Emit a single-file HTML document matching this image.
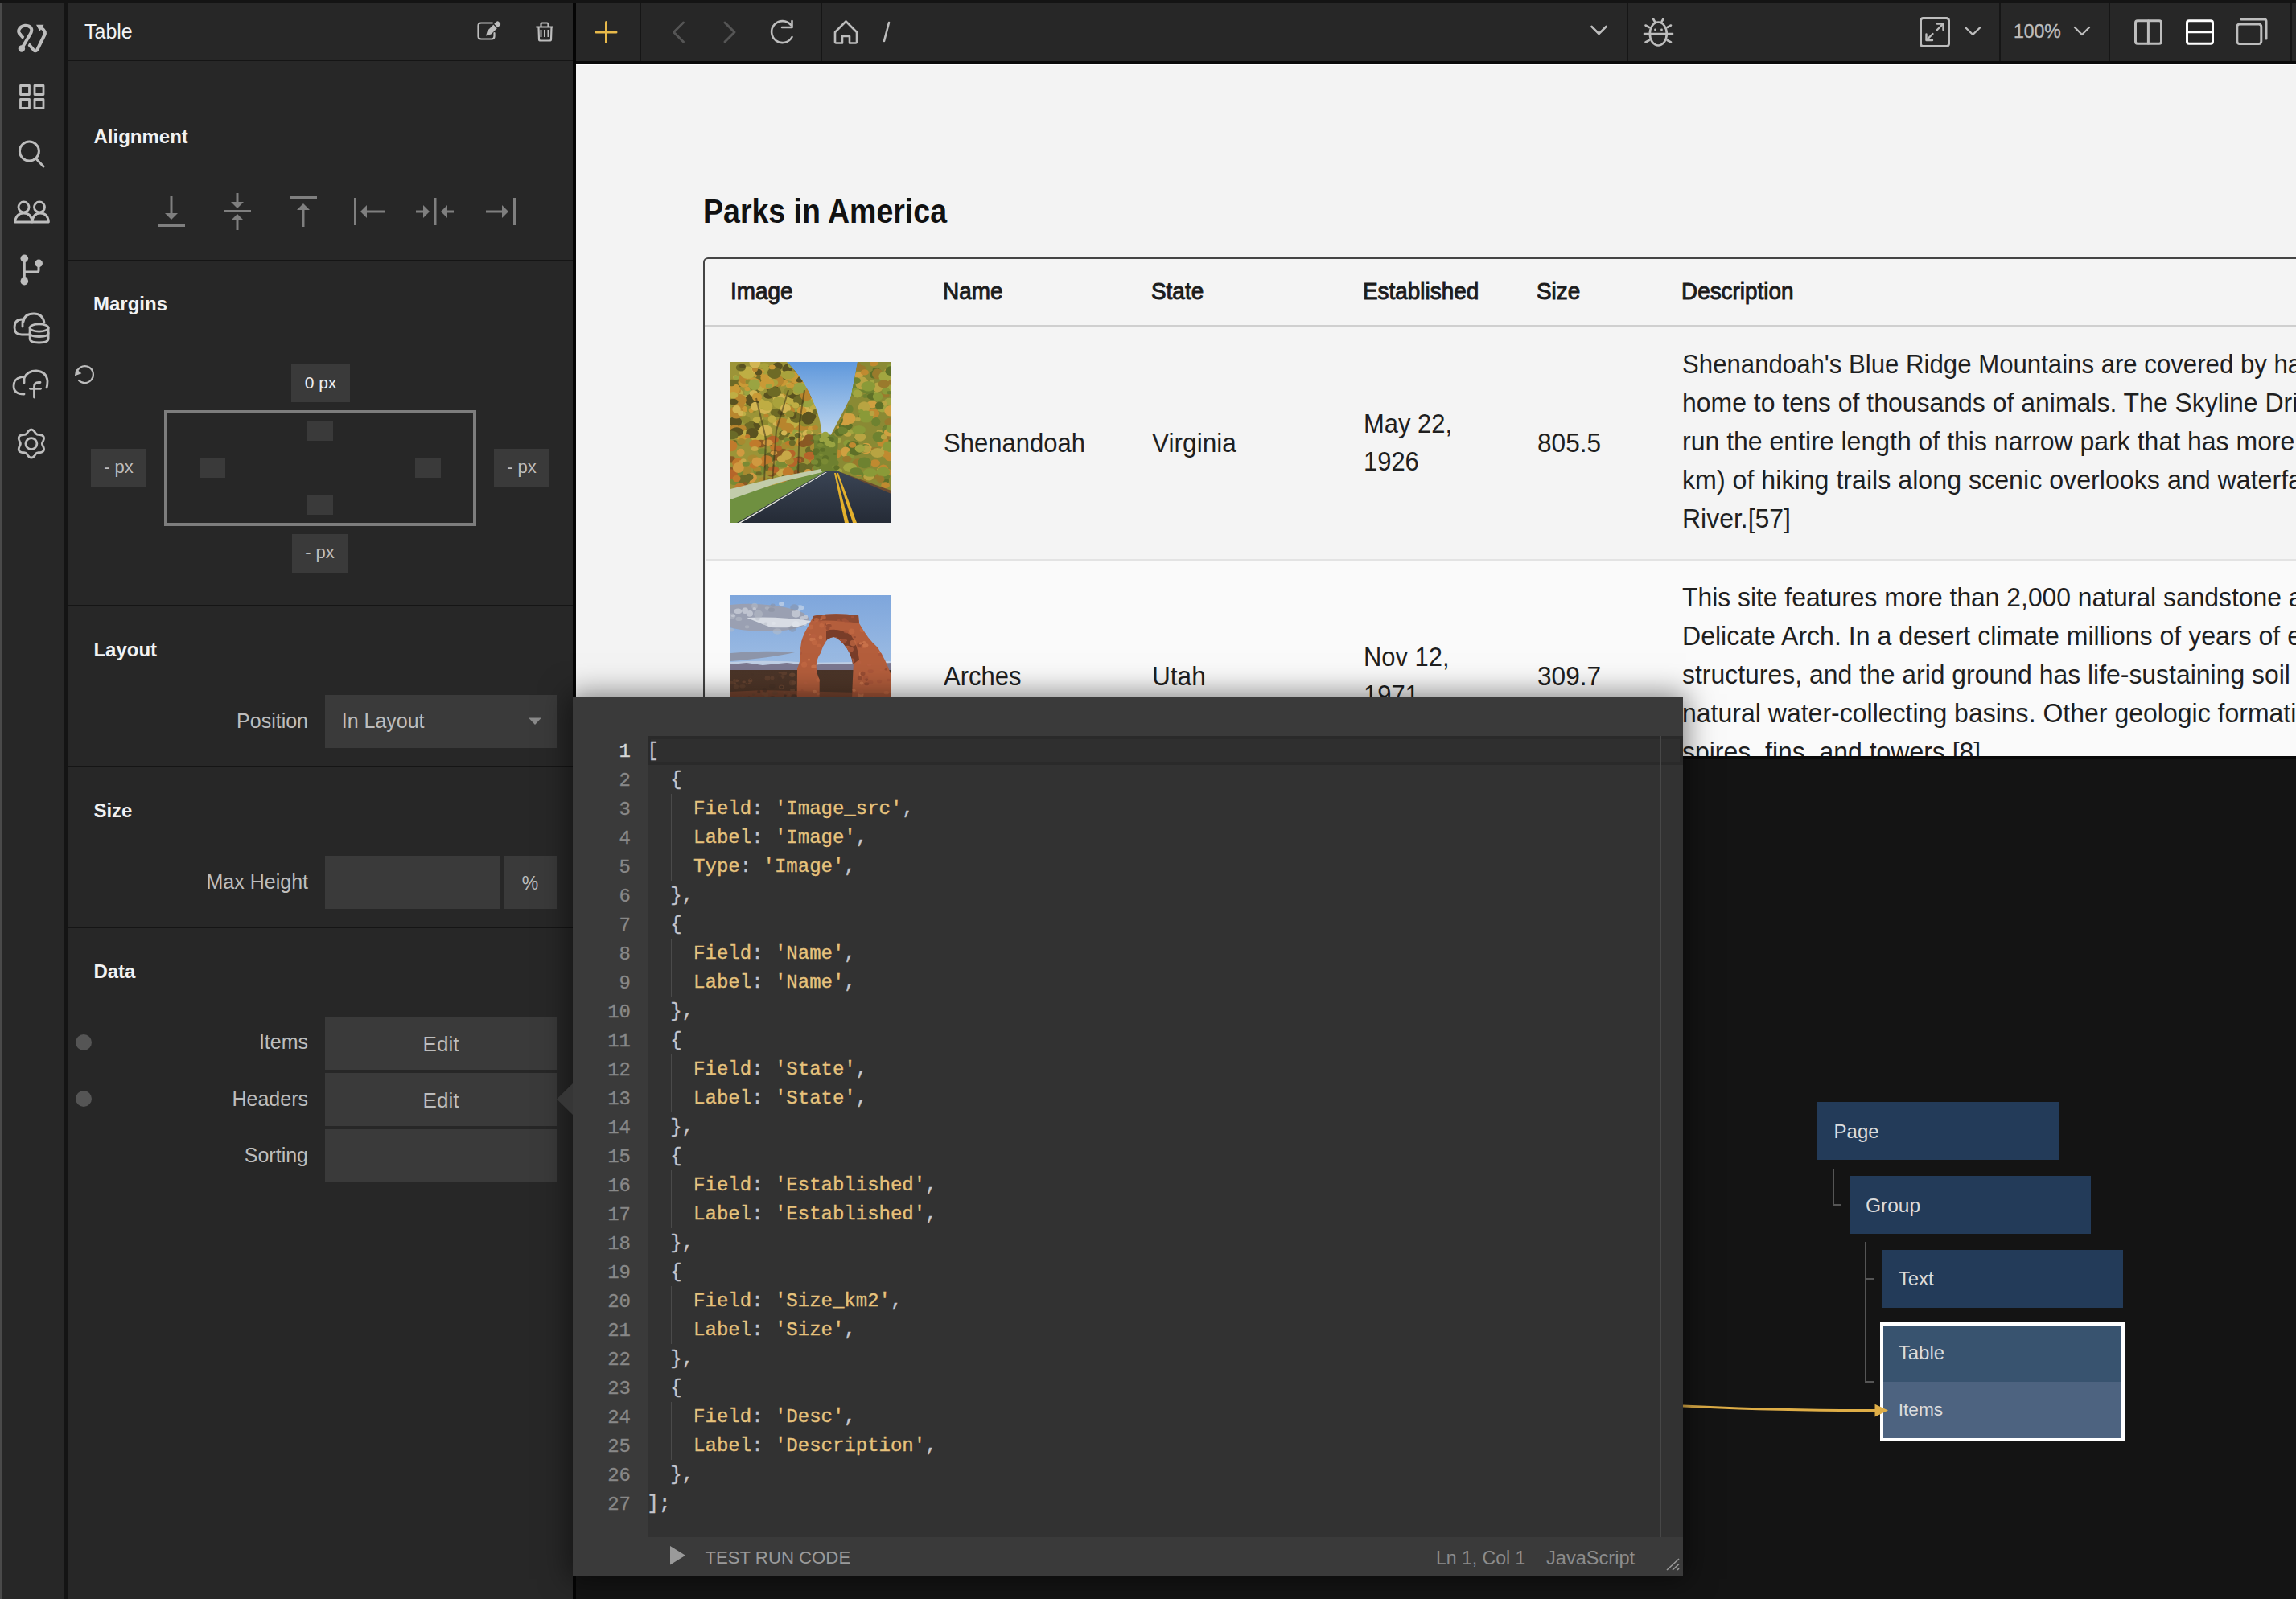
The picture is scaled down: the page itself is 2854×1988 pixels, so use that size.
<!DOCTYPE html>
<html><head><meta charset="utf-8"><style>
html,body{margin:0;padding:0;width:2854px;height:1988px;overflow:hidden;background:#141414;}
body{position:relative;}
</style></head><body>
<div style="position:absolute;left:0px;top:0px;width:2854px;height:1988px;background:#141414;"></div>
<div style="position:absolute;left:0px;top:4px;width:80px;height:1984px;background:#272727;"></div>
<div style="position:absolute;left:0px;top:4px;width:2px;height:1984px;background:#4a4a4a;"></div>
<div style="position:absolute;left:84px;top:4px;width:628px;height:1984px;background:#272727;"></div>
<div style="position:absolute;left:712px;top:4px;width:4px;height:1984px;background:#050505;"></div>
<div style="position:absolute;left:716px;top:4px;width:2138px;height:72px;background:#272727;"></div>
<div style="position:absolute;left:716px;top:76px;width:2138px;height:4px;background:#0a0a0a;"></div>
<div style="position:absolute;left:716px;top:80px;width:2138px;height:860px;background:#f3f3f3;"></div>
<div style="position:absolute;left:716px;top:80px;width:2138px;height:1px;background:#ffffff;"></div>
<div style="position:absolute;left:795px;top:4px;width:2px;height:72px;background:#161616;"></div>
<div style="position:absolute;left:1020px;top:4px;width:2px;height:72px;background:#161616;"></div>
<div style="position:absolute;left:2022px;top:4px;width:2px;height:72px;background:#161616;"></div>
<div style="position:absolute;left:2485px;top:4px;width:2px;height:72px;background:#161616;"></div>
<div style="position:absolute;left:2621px;top:4px;width:2px;height:72px;background:#161616;"></div>
<div style="position:absolute;left:2847px;top:4px;width:2px;height:72px;background:#161616;"></div>
<div style="position:absolute;left:105px;top:23.83px;font:400 25px/31px 'Liberation Sans', sans-serif;color:#f4f4f4;white-space:nowrap;">Table</div>
<div style="position:absolute;left:84px;top:74px;width:628px;height:2px;background:#151515;"></div>
<div style="position:absolute;left:116.5px;top:155.48px;font:700 24px/30px 'Liberation Sans', sans-serif;color:#f2f2f2;white-space:nowrap;">Alignment</div>
<div style="position:absolute;left:84px;top:323px;width:628px;height:2px;background:#151515;"></div>
<div style="position:absolute;left:116px;top:363.18px;font:700 24px/30px 'Liberation Sans', sans-serif;color:#f2f2f2;white-space:nowrap;">Margins</div>
<div style="position:absolute;left:362px;top:452px;width:73px;height:48px;background:#3a3a3a;"></div>
<div style="position:absolute;left:398.5px;top:462.92px;font:400 21px/26px 'Liberation Sans', sans-serif;color:#ededed;white-space:nowrap;transform:translateX(-50%);">0 px</div>
<div style="position:absolute;left:204px;top:510px;width:380px;height:136px;background:transparent;border:4px solid #7d7d7d;"></div>
<div style="position:absolute;left:382px;top:524px;width:32px;height:24px;background:#3a3a3a;"></div>
<div style="position:absolute;left:248px;top:570px;width:32px;height:24px;background:#3a3a3a;"></div>
<div style="position:absolute;left:516px;top:570px;width:32px;height:24px;background:#3a3a3a;"></div>
<div style="position:absolute;left:382px;top:616px;width:32px;height:24px;background:#3a3a3a;"></div>
<div style="position:absolute;left:113px;top:558px;width:69px;height:48px;background:#3a3a3a;"></div>
<div style="position:absolute;left:147.5px;top:566.87px;font:400 22px/28px 'Liberation Sans', sans-serif;color:#bdbdbd;white-space:nowrap;transform:translateX(-50%);">- px</div>
<div style="position:absolute;left:614px;top:558px;width:69px;height:48px;background:#3a3a3a;"></div>
<div style="position:absolute;left:648.5px;top:566.87px;font:400 22px/28px 'Liberation Sans', sans-serif;color:#bdbdbd;white-space:nowrap;transform:translateX(-50%);">- px</div>
<div style="position:absolute;left:363px;top:664px;width:69px;height:48px;background:#3a3a3a;"></div>
<div style="position:absolute;left:397.5px;top:672.97px;font:400 22px/28px 'Liberation Sans', sans-serif;color:#bdbdbd;white-space:nowrap;transform:translateX(-50%);">- px</div>
<div style="position:absolute;left:84px;top:752px;width:628px;height:2px;background:#151515;"></div>
<div style="position:absolute;left:116.4px;top:793.48px;font:700 24px/30px 'Liberation Sans', sans-serif;color:#f2f2f2;white-space:nowrap;">Layout</div>
<div style="position:absolute;right:2471px;top:881.23px;font:400 25px/31px 'Liberation Sans', sans-serif;color:#bdbdbd;white-space:nowrap;">Position</div>
<div style="position:absolute;left:404px;top:864px;width:288px;height:66px;background:#3a3a3a;"></div>
<div style="position:absolute;left:424.7px;top:881.23px;font:400 25px/31px 'Liberation Sans', sans-serif;color:#bdbdbd;white-space:nowrap;">In Layout</div>
<div style="position:absolute;left:84px;top:952px;width:628px;height:2px;background:#151515;"></div>
<div style="position:absolute;left:116.4px;top:992.68px;font:700 24px/30px 'Liberation Sans', sans-serif;color:#f2f2f2;white-space:nowrap;">Size</div>
<div style="position:absolute;right:2471px;top:1080.83px;font:400 25px/31px 'Liberation Sans', sans-serif;color:#bdbdbd;white-space:nowrap;">Max Height</div>
<div style="position:absolute;left:404px;top:1064px;width:218px;height:66px;background:#3a3a3a;"></div>
<div style="position:absolute;left:626px;top:1064px;width:66px;height:66px;background:#3a3a3a;"></div>
<div style="position:absolute;left:659px;top:1083.53px;font:400 23px/29px 'Liberation Sans', sans-serif;color:#bdbdbd;white-space:nowrap;transform:translateX(-50%);">%</div>
<div style="position:absolute;left:84px;top:1152px;width:628px;height:2px;background:#151515;"></div>
<div style="position:absolute;left:116.4px;top:1192.68px;font:700 24px/30px 'Liberation Sans', sans-serif;color:#f2f2f2;white-space:nowrap;">Data</div>
<div style="position:absolute;left:404px;top:1264px;width:288px;height:66px;background:#3a3a3a;"></div>
<div style="position:absolute;left:548px;top:1281.79px;font:400 26px/32px 'Liberation Sans', sans-serif;color:#bdbdbd;white-space:nowrap;transform:translateX(-50%);">Edit</div>
<div style="position:absolute;right:2471px;top:1280.43px;font:400 25px/31px 'Liberation Sans', sans-serif;color:#bdbdbd;white-space:nowrap;">Items</div>
<div style="position:absolute;left:404px;top:1334px;width:288px;height:66px;background:#3a3a3a;"></div>
<div style="position:absolute;left:548px;top:1351.89px;font:400 26px/32px 'Liberation Sans', sans-serif;color:#bdbdbd;white-space:nowrap;transform:translateX(-50%);">Edit</div>
<div style="position:absolute;right:2471px;top:1350.53px;font:400 25px/31px 'Liberation Sans', sans-serif;color:#bdbdbd;white-space:nowrap;">Headers</div>
<div style="position:absolute;left:404px;top:1404px;width:288px;height:66px;background:#3a3a3a;"></div>
<div style="position:absolute;right:2471px;top:1420.63px;font:400 25px/31px 'Liberation Sans', sans-serif;color:#bdbdbd;white-space:nowrap;">Sorting</div>
<div style="position:absolute;left:94px;top:1286px;width:20px;height:20px;background:#555555;border-radius:50%;"></div>
<div style="position:absolute;left:94px;top:1356px;width:20px;height:20px;background:#555555;border-radius:50%;"></div>
<div style="position:absolute;left:2503px;top:24.53px;font:400 23px/29px 'Liberation Sans', sans-serif;color:#bdbdbd;white-space:nowrap;-webkit-text-stroke:0.4px #bdbdbd;">100%</div>
<div style="position:absolute;left:716px;top:81px;width:2138px;height:859px;overflow:hidden;"><div style="position:absolute;left:-716px;top:-81px;width:2854px;height:1988px;"><div style="position:absolute;left:874px;top:236.94px;font:700 42px/52px 'Liberation Sans', sans-serif;color:#111111;white-space:nowrap;transform:scaleX(0.893);transform-origin:0 0;">Parks in America</div><div style="position:absolute;left:874px;top:320px;width:2200px;height:1200px;background:#f4f4f4;border:2px solid #444;border-radius:6px;box-sizing:border-box;"></div><div style="position:absolute;left:876px;top:404px;width:2200px;height:2px;background:#cfcfcf;"></div><div style="position:absolute;left:877px;top:695px;width:2200px;height:2px;background:#e3e3e3;"></div><div style="position:absolute;left:877px;top:697px;width:2200px;height:600px;background:#fafafa;"></div><div style="position:absolute;left:907.8px;top:343.30px;font:400 30px/38px 'Liberation Sans', sans-serif;color:#1c1c1c;white-space:nowrap;transform:scaleX(0.93);transform-origin:0 0;-webkit-text-stroke:1px #1c1c1c;">Image</div><div style="position:absolute;left:1171.8px;top:343.30px;font:400 30px/38px 'Liberation Sans', sans-serif;color:#1c1c1c;white-space:nowrap;transform:scaleX(0.93);transform-origin:0 0;-webkit-text-stroke:1px #1c1c1c;">Name</div><div style="position:absolute;left:1431.2px;top:343.30px;font:400 30px/38px 'Liberation Sans', sans-serif;color:#1c1c1c;white-space:nowrap;transform:scaleX(0.93);transform-origin:0 0;-webkit-text-stroke:1px #1c1c1c;">State</div><div style="position:absolute;left:1693.8px;top:343.30px;font:400 30px/38px 'Liberation Sans', sans-serif;color:#1c1c1c;white-space:nowrap;transform:scaleX(0.93);transform-origin:0 0;-webkit-text-stroke:1px #1c1c1c;">Established</div><div style="position:absolute;left:1909.8px;top:343.30px;font:400 30px/38px 'Liberation Sans', sans-serif;color:#1c1c1c;white-space:nowrap;transform:scaleX(0.93);transform-origin:0 0;-webkit-text-stroke:1px #1c1c1c;">Size</div><div style="position:absolute;left:2089.7px;top:343.30px;font:400 30px/38px 'Liberation Sans', sans-serif;color:#1c1c1c;white-space:nowrap;transform:scaleX(0.93);transform-origin:0 0;-webkit-text-stroke:1px #1c1c1c;">Description</div><div style="position:absolute;left:1173px;top:529.21px;font:400 34px/42px 'Liberation Sans', sans-serif;color:#1f1f1f;white-space:nowrap;transform:scaleX(0.912);transform-origin:0 0;">Shenandoah</div><div style="position:absolute;left:1432px;top:529.21px;font:400 34px/42px 'Liberation Sans', sans-serif;color:#1f1f1f;white-space:nowrap;transform:scaleX(0.93);transform-origin:0 0;">Virginia</div><div style="position:absolute;left:1694.6px;top:504.71px;font:400 34px/42px 'Liberation Sans', sans-serif;color:#1f1f1f;white-space:nowrap;transform:scaleX(0.91);transform-origin:0 0;">May 22,</div><div style="position:absolute;left:1694.6px;top:552.21px;font:400 34px/42px 'Liberation Sans', sans-serif;color:#1f1f1f;white-space:nowrap;transform:scaleX(0.91);transform-origin:0 0;">1926</div><div style="position:absolute;left:1910.6px;top:529.21px;font:400 34px/42px 'Liberation Sans', sans-serif;color:#1f1f1f;white-space:nowrap;transform:scaleX(0.93);transform-origin:0 0;">805.5</div><div style="position:absolute;left:2090.5px;top:431.21px;font:400 34px/42px 'Liberation Sans', sans-serif;color:#1f1f1f;white-space:nowrap;transform:scaleX(0.9168);transform-origin:0 0;">Shenandoah's Blue Ridge Mountains are covered by hardwood forests that teem with</div><div style="position:absolute;left:2090.5px;top:479.21px;font:400 34px/42px 'Liberation Sans', sans-serif;color:#1f1f1f;white-space:nowrap;transform:scaleX(0.9403);transform-origin:0 0;">home to tens of thousands of animals. The Skyline Drive and Appalachian Trail</div><div style="position:absolute;left:2090.5px;top:527.21px;font:400 34px/42px 'Liberation Sans', sans-serif;color:#1f1f1f;white-space:nowrap;transform:scaleX(0.9413);transform-origin:0 0;">run the entire length of this narrow park that has more than 500 miles (800</div><div style="position:absolute;left:2090.5px;top:575.21px;font:400 34px/42px 'Liberation Sans', sans-serif;color:#1f1f1f;white-space:nowrap;transform:scaleX(0.9467);transform-origin:0 0;">km) of hiking trails along scenic overlooks and waterfalls of the Shenandoah</div><div style="position:absolute;left:2090.5px;top:623.21px;font:400 34px/42px 'Liberation Sans', sans-serif;color:#1f1f1f;white-space:nowrap;transform:scaleX(0.94);transform-origin:0 0;">River.[57]</div><div style="position:absolute;left:1173px;top:819.21px;font:400 34px/42px 'Liberation Sans', sans-serif;color:#1f1f1f;white-space:nowrap;transform:scaleX(0.912);transform-origin:0 0;">Arches</div><div style="position:absolute;left:1432px;top:819.21px;font:400 34px/42px 'Liberation Sans', sans-serif;color:#1f1f1f;white-space:nowrap;transform:scaleX(0.93);transform-origin:0 0;">Utah</div><div style="position:absolute;left:1694.6px;top:794.71px;font:400 34px/42px 'Liberation Sans', sans-serif;color:#1f1f1f;white-space:nowrap;transform:scaleX(0.91);transform-origin:0 0;">Nov 12,</div><div style="position:absolute;left:1694.6px;top:842.21px;font:400 34px/42px 'Liberation Sans', sans-serif;color:#1f1f1f;white-space:nowrap;transform:scaleX(0.91);transform-origin:0 0;">1971</div><div style="position:absolute;left:1910.6px;top:819.21px;font:400 34px/42px 'Liberation Sans', sans-serif;color:#1f1f1f;white-space:nowrap;transform:scaleX(0.93);transform-origin:0 0;">309.7</div><div style="position:absolute;left:2090.5px;top:721.21px;font:400 34px/42px 'Liberation Sans', sans-serif;color:#1f1f1f;white-space:nowrap;transform:scaleX(0.9362);transform-origin:0 0;">This site features more than 2,000 natural sandstone arches, including the famous</div><div style="position:absolute;left:2090.5px;top:769.21px;font:400 34px/42px 'Liberation Sans', sans-serif;color:#1f1f1f;white-space:nowrap;transform:scaleX(0.9432);transform-origin:0 0;">Delicate Arch. In a desert climate millions of years of erosion have led to these</div><div style="position:absolute;left:2090.5px;top:817.21px;font:400 34px/42px 'Liberation Sans', sans-serif;color:#1f1f1f;white-space:nowrap;transform:scaleX(0.9389);transform-origin:0 0;">structures, and the arid ground has life-sustaining soil crust and potholes,</div><div style="position:absolute;left:2090.5px;top:865.21px;font:400 34px/42px 'Liberation Sans', sans-serif;color:#1f1f1f;white-space:nowrap;transform:scaleX(0.9416);transform-origin:0 0;">natural water-collecting basins. Other geologic formations are stone columns,</div><div style="position:absolute;left:2090.5px;top:913.21px;font:400 34px/42px 'Liberation Sans', sans-serif;color:#1f1f1f;white-space:nowrap;transform:scaleX(0.94);transform-origin:0 0;">spires, fins, and towers.[8]</div><svg style="position:absolute;left:908px;top:450px" width="200" height="200" viewBox="0 0 200 200">
<defs>
<linearGradient id="sky1" x1="0" y1="0" x2="0" y2="1"><stop offset="0" stop-color="#5f98dc"/><stop offset="1" stop-color="#c3d9ef"/></linearGradient>
<linearGradient id="road1" x1="0" y1="0" x2="0" y2="1"><stop offset="0" stop-color="#3a4454"/><stop offset="1" stop-color="#252b36"/></linearGradient>
<clipPath id="ltree"><path d="M0,0 L70,0 Q92,22 102,48 Q114,72 114,100 L114,140 L0,165 Z"/></clipPath>
<clipPath id="rtree"><path d="M158,0 L200,0 L200,168 L126,138 Q116,112 124,94 Q142,70 150,42 Z"/></clipPath>
</defs>
<rect width="200" height="200" fill="#8c8430"/>
<polygon points="66,0 162,0 156,30 140,62 124,92 108,98 103,70 92,40 78,15" fill="url(#sky1)"/>
<g clip-path="url(#ltree)"><rect width="200" height="200" fill="#9c9438"/><ellipse cx="37.2" cy="15.1" rx="6.9" ry="6.4" fill="#bfae44"/><ellipse cx="10.8" cy="58.3" rx="8.5" ry="5.2" fill="#6e6a26"/><ellipse cx="49.9" cy="7.0" rx="3.5" ry="2.2" fill="#5a5220"/><ellipse cx="65.0" cy="94.7" rx="6.8" ry="5.6" fill="#a9a23c"/><ellipse cx="45.6" cy="97.6" rx="3.3" ry="2.3" fill="#8e8a30"/><ellipse cx="16.6" cy="11.8" rx="4.9" ry="3.1" fill="#8e8a30"/><ellipse cx="65.7" cy="18.8" rx="3.6" ry="3.0" fill="#bfae44"/><ellipse cx="71.2" cy="49.6" rx="6.2" ry="4.9" fill="#9aa442"/><ellipse cx="106.2" cy="36.2" rx="4.5" ry="3.9" fill="#8e8a30"/><ellipse cx="28.1" cy="57.4" rx="6.2" ry="5.5" fill="#9aa442"/><ellipse cx="33.1" cy="98.0" rx="3.7" ry="2.5" fill="#5a5220"/><ellipse cx="39.3" cy="93.3" rx="5.5" ry="5.0" fill="#bfae44"/><ellipse cx="65.9" cy="87.5" rx="4.9" ry="4.1" fill="#9aa442"/><ellipse cx="66.7" cy="45.6" rx="8.0" ry="6.3" fill="#c99a36"/><ellipse cx="76.4" cy="6.1" rx="7.2" ry="5.1" fill="#b8862e"/><ellipse cx="44.4" cy="66.9" rx="3.1" ry="2.3" fill="#b8862e"/><ellipse cx="70.3" cy="49.4" rx="4.3" ry="2.8" fill="#c99a36"/><ellipse cx="28.5" cy="39.1" rx="8.2" ry="5.5" fill="#bfae44"/><ellipse cx="46.2" cy="27.8" rx="3.8" ry="3.6" fill="#5a5220"/><ellipse cx="32.0" cy="41.5" rx="5.2" ry="5.1" fill="#5a5220"/><ellipse cx="17.4" cy="17.6" rx="4.4" ry="2.7" fill="#6e6a26"/><ellipse cx="95.6" cy="18.2" rx="4.7" ry="3.6" fill="#8e8a30"/><ellipse cx="42.5" cy="56.6" rx="8.7" ry="8.5" fill="#d2b552"/><ellipse cx="75.3" cy="74.0" rx="5.7" ry="4.3" fill="#d2b552"/><ellipse cx="45.9" cy="10.4" rx="6.8" ry="4.6" fill="#a9a23c"/><ellipse cx="113.2" cy="44.1" rx="3.7" ry="2.3" fill="#a9a23c"/><ellipse cx="65.2" cy="53.7" rx="8.7" ry="5.5" fill="#a9a23c"/><ellipse cx="23.9" cy="37.6" rx="6.8" ry="5.7" fill="#9aa442"/><ellipse cx="54.5" cy="11.5" rx="5.9" ry="4.7" fill="#b8862e"/><ellipse cx="35.9" cy="14.4" rx="7.5" ry="5.9" fill="#c99a36"/><ellipse cx="79.6" cy="51.6" rx="4.2" ry="3.2" fill="#d2b552"/><ellipse cx="79.4" cy="91.4" rx="7.5" ry="7.5" fill="#c99a36"/><ellipse cx="99.3" cy="69.6" rx="4.6" ry="4.4" fill="#9aa442"/><ellipse cx="40.9" cy="22.3" rx="6.2" ry="4.6" fill="#d2b552"/><ellipse cx="25.6" cy="81.2" rx="8.9" ry="8.2" fill="#6e6a26"/><ellipse cx="94.1" cy="74.0" rx="4.4" ry="3.5" fill="#d2b552"/><ellipse cx="84.1" cy="99.0" rx="7.7" ry="5.4" fill="#b8862e"/><ellipse cx="79.6" cy="95.7" rx="5.7" ry="5.6" fill="#9aa442"/><ellipse cx="41.9" cy="22.0" rx="4.4" ry="3.2" fill="#6e6a26"/><ellipse cx="55.5" cy="98.5" rx="6.7" ry="5.3" fill="#a9a23c"/><ellipse cx="75.1" cy="80.0" rx="3.5" ry="3.4" fill="#bfae44"/><ellipse cx="90.0" cy="75.0" rx="5.9" ry="4.5" fill="#8e8a30"/><ellipse cx="73.1" cy="8.7" rx="8.7" ry="6.8" fill="#5a5220"/><ellipse cx="85.5" cy="8.5" rx="4.0" ry="2.4" fill="#8e8a30"/><ellipse cx="67.9" cy="46.5" rx="6.9" ry="6.0" fill="#b8862e"/><ellipse cx="40.3" cy="54.9" rx="3.8" ry="3.5" fill="#a9a23c"/><ellipse cx="83.5" cy="10.3" rx="7.5" ry="5.8" fill="#8e8a30"/><ellipse cx="100.3" cy="82.6" rx="4.3" ry="2.9" fill="#c99a36"/><ellipse cx="57.6" cy="76.4" rx="5.0" ry="3.8" fill="#d2b552"/><ellipse cx="15.1" cy="91.0" rx="5.1" ry="4.4" fill="#b8862e"/><ellipse cx="93.7" cy="51.7" rx="8.0" ry="5.2" fill="#d2b552"/><ellipse cx="17.5" cy="51.1" rx="8.2" ry="6.9" fill="#8e8a30"/><ellipse cx="89.2" cy="15.0" rx="3.8" ry="3.2" fill="#bfae44"/><ellipse cx="37.5" cy="51.8" rx="6.3" ry="6.0" fill="#bfae44"/><ellipse cx="6.5" cy="19.1" rx="3.3" ry="2.6" fill="#bfae44"/><ellipse cx="64.6" cy="76.0" rx="8.5" ry="6.2" fill="#b8862e"/><ellipse cx="111.9" cy="60.6" rx="4.2" ry="3.3" fill="#c99a36"/><ellipse cx="61.3" cy="47.8" rx="8.6" ry="8.2" fill="#d2b552"/><ellipse cx="108.4" cy="26.0" rx="6.4" ry="6.0" fill="#6e6a26"/><ellipse cx="15.8" cy="12.2" rx="5.7" ry="4.9" fill="#bfae44"/><ellipse cx="49.3" cy="21.3" rx="4.8" ry="4.6" fill="#bfae44"/><ellipse cx="17.8" cy="71.6" rx="7.0" ry="4.9" fill="#8e8a30"/><ellipse cx="15.8" cy="46.8" rx="7.5" ry="5.7" fill="#bfae44"/><ellipse cx="56.0" cy="99.0" rx="8.0" ry="7.1" fill="#8e8a30"/><ellipse cx="114.3" cy="40.4" rx="5.5" ry="4.0" fill="#9aa442"/><ellipse cx="83.0" cy="1.9" rx="6.3" ry="5.6" fill="#b8862e"/><ellipse cx="44.2" cy="51.7" rx="4.8" ry="3.1" fill="#bfae44"/><ellipse cx="105.6" cy="22.9" rx="8.3" ry="5.8" fill="#bfae44"/><ellipse cx="4.6" cy="77.9" rx="4.6" ry="4.3" fill="#8e8a30"/><ellipse cx="97.7" cy="67.6" rx="8.7" ry="5.7" fill="#5a5220"/><ellipse cx="105.7" cy="57.1" rx="7.2" ry="5.1" fill="#bfae44"/><ellipse cx="92.0" cy="18.3" rx="8.4" ry="8.2" fill="#c99a36"/><ellipse cx="73.0" cy="80.2" rx="3.5" ry="2.2" fill="#6e6a26"/><ellipse cx="99.2" cy="45.4" rx="5.0" ry="3.9" fill="#d2b552"/><ellipse cx="105.3" cy="62.2" rx="3.3" ry="3.2" fill="#6e6a26"/><ellipse cx="111.5" cy="26.2" rx="4.1" ry="3.5" fill="#c99a36"/><ellipse cx="61.1" cy="20.6" rx="5.7" ry="4.0" fill="#8e8a30"/><ellipse cx="92.4" cy="99.4" rx="3.2" ry="2.9" fill="#a9a23c"/><ellipse cx="63.4" cy="18.9" rx="5.8" ry="3.8" fill="#b8862e"/><ellipse cx="94.2" cy="43.2" rx="6.0" ry="5.9" fill="#5a5220"/><ellipse cx="35.4" cy="21.5" rx="4.4" ry="4.1" fill="#6e6a26"/><ellipse cx="81.3" cy="63.6" rx="5.4" ry="5.4" fill="#9aa442"/><ellipse cx="96.3" cy="1.4" rx="6.8" ry="5.2" fill="#c99a36"/><ellipse cx="6.4" cy="66.5" rx="5.3" ry="4.6" fill="#d2b552"/><ellipse cx="32.4" cy="24.2" rx="4.8" ry="3.2" fill="#b8862e"/><ellipse cx="30.9" cy="0.4" rx="5.2" ry="5.1" fill="#9aa442"/><ellipse cx="62.9" cy="24.4" rx="8.8" ry="6.0" fill="#c99a36"/><ellipse cx="21.0" cy="33.5" rx="3.5" ry="2.8" fill="#c99a36"/><ellipse cx="23.1" cy="50.5" rx="3.0" ry="2.8" fill="#c99a36"/><ellipse cx="16.5" cy="58.7" rx="5.4" ry="3.9" fill="#c99a36"/><ellipse cx="26.8" cy="58.6" rx="6.2" ry="5.3" fill="#8e8a30"/><ellipse cx="82.3" cy="87.9" rx="5.3" ry="4.7" fill="#9aa442"/><ellipse cx="56.8" cy="28.4" rx="6.7" ry="4.1" fill="#8e8a30"/><ellipse cx="96.1" cy="89.2" rx="6.8" ry="4.4" fill="#d2b552"/><ellipse cx="60.2" cy="50.4" rx="8.0" ry="7.5" fill="#a9a23c"/><ellipse cx="67.2" cy="89.3" rx="7.1" ry="4.5" fill="#6e6a26"/><ellipse cx="4.8" cy="63.7" rx="8.8" ry="8.2" fill="#5a5220"/><ellipse cx="64.2" cy="62.8" rx="6.8" ry="5.4" fill="#6e6a26"/><ellipse cx="0.4" cy="79.8" rx="7.5" ry="7.2" fill="#d2b552"/><ellipse cx="10.6" cy="52.6" rx="7.5" ry="5.2" fill="#b8862e"/><ellipse cx="8.6" cy="26.6" rx="7.4" ry="5.1" fill="#6e6a26"/><ellipse cx="74.7" cy="46.0" rx="8.1" ry="6.4" fill="#bfae44"/><ellipse cx="78.6" cy="76.7" rx="6.7" ry="4.2" fill="#6e6a26"/><ellipse cx="17.0" cy="25.4" rx="7.5" ry="6.3" fill="#c99a36"/><ellipse cx="15.3" cy="48.2" rx="5.9" ry="5.2" fill="#bfae44"/><ellipse cx="77.7" cy="29.1" rx="6.1" ry="4.8" fill="#b8862e"/><ellipse cx="88.2" cy="99.3" rx="6.3" ry="6.2" fill="#c99a36"/><ellipse cx="107.7" cy="1.8" rx="5.8" ry="5.7" fill="#d2b552"/><ellipse cx="51.7" cy="26.9" rx="4.3" ry="2.7" fill="#6e6a26"/><ellipse cx="10.4" cy="74.7" rx="4.6" ry="3.0" fill="#9aa442"/><ellipse cx="94.3" cy="50.9" rx="8.3" ry="5.8" fill="#9aa442"/><ellipse cx="103.2" cy="48.6" rx="3.1" ry="3.1" fill="#a9a23c"/><ellipse cx="78.4" cy="40.5" rx="7.4" ry="5.4" fill="#5a5220"/><ellipse cx="36.3" cy="84.0" rx="3.0" ry="2.8" fill="#9aa442"/><ellipse cx="13.8" cy="92.6" rx="7.3" ry="5.1" fill="#c99a36"/><ellipse cx="7.5" cy="39.0" rx="8.2" ry="6.1" fill="#bfae44"/><ellipse cx="49.2" cy="27.5" rx="3.3" ry="2.0" fill="#bfae44"/><ellipse cx="76.1" cy="63.5" rx="3.9" ry="3.0" fill="#c99a36"/><ellipse cx="36.3" cy="77.3" rx="7.7" ry="7.4" fill="#5a5220"/><ellipse cx="93.4" cy="63.1" rx="8.5" ry="7.0" fill="#d2b552"/><ellipse cx="82.8" cy="4.9" rx="7.4" ry="6.3" fill="#b8862e"/><ellipse cx="15.9" cy="86.9" rx="5.9" ry="3.8" fill="#d2b552"/><ellipse cx="54.3" cy="34.4" rx="4.8" ry="3.6" fill="#c99a36"/><ellipse cx="27.4" cy="48.3" rx="7.0" ry="4.7" fill="#bfae44"/><ellipse cx="18.6" cy="20.8" rx="8.4" ry="6.9" fill="#b8862e"/><ellipse cx="52.1" cy="33.3" rx="7.6" ry="5.0" fill="#5a5220"/><ellipse cx="22.1" cy="9.1" rx="5.1" ry="3.7" fill="#bfae44"/><ellipse cx="42.4" cy="80.9" rx="4.2" ry="3.8" fill="#a9a23c"/><ellipse cx="47.5" cy="41.4" rx="6.1" ry="4.4" fill="#5a5220"/><ellipse cx="86.5" cy="49.8" rx="6.4" ry="4.2" fill="#9aa442"/><ellipse cx="57.9" cy="63.0" rx="8.2" ry="5.2" fill="#6e6a26"/><ellipse cx="103.1" cy="38.5" rx="6.9" ry="6.7" fill="#5a5220"/><ellipse cx="97.6" cy="87.3" rx="3.1" ry="2.4" fill="#a9a23c"/><ellipse cx="87.8" cy="80.4" rx="8.8" ry="5.3" fill="#b8862e"/><ellipse cx="45.0" cy="92.7" rx="8.0" ry="7.9" fill="#b8862e"/><ellipse cx="28.6" cy="10.9" rx="3.9" ry="3.9" fill="#d2b552"/><ellipse cx="12.5" cy="82.5" rx="7.2" ry="4.6" fill="#b8862e"/><ellipse cx="89.3" cy="0.1" rx="3.8" ry="3.2" fill="#a9a23c"/><ellipse cx="34.9" cy="12.8" rx="4.5" ry="4.0" fill="#5a5220"/><ellipse cx="12.9" cy="7.0" rx="6.1" ry="4.6" fill="#6e6a26"/><ellipse cx="25.7" cy="60.1" rx="3.1" ry="3.1" fill="#c99a36"/><ellipse cx="32.0" cy="31.6" rx="8.0" ry="6.3" fill="#6e6a26"/><ellipse cx="27.0" cy="24.7" rx="8.8" ry="5.5" fill="#c99a36"/><ellipse cx="22.3" cy="88.5" rx="6.9" ry="4.8" fill="#bfae44"/><ellipse cx="76.7" cy="92.5" rx="4.4" ry="3.8" fill="#a9a23c"/><ellipse cx="82.6" cy="36.2" rx="5.4" ry="4.9" fill="#a9a23c"/><ellipse cx="85.0" cy="50.5" rx="4.2" ry="3.1" fill="#6e6a26"/><ellipse cx="94.3" cy="23.1" rx="4.3" ry="2.8" fill="#c99a36"/><ellipse cx="71.7" cy="61.0" rx="8.4" ry="6.4" fill="#b8862e"/><ellipse cx="76.5" cy="94.9" rx="3.9" ry="2.4" fill="#5a5220"/><ellipse cx="2.7" cy="59.6" rx="5.5" ry="3.7" fill="#a9a23c"/><ellipse cx="51.7" cy="71.2" rx="4.9" ry="4.9" fill="#bfae44"/><ellipse cx="107.1" cy="32.9" rx="4.1" ry="3.7" fill="#d2b552"/><ellipse cx="3.7" cy="66.4" rx="5.3" ry="5.2" fill="#9aa442"/><ellipse cx="50.9" cy="10.9" rx="3.5" ry="2.6" fill="#bfae44"/><ellipse cx="109.9" cy="12.4" rx="8.8" ry="6.6" fill="#6e6a26"/><ellipse cx="88.4" cy="30.9" rx="7.8" ry="4.8" fill="#bfae44"/><ellipse cx="54.4" cy="37.3" rx="8.5" ry="6.2" fill="#6e6a26"/><ellipse cx="84.8" cy="47.5" rx="6.8" ry="6.3" fill="#6e6a26"/><ellipse cx="88.2" cy="4.1" rx="3.2" ry="3.0" fill="#bfae44"/><ellipse cx="7.1" cy="19.5" rx="3.4" ry="2.5" fill="#9aa442"/><ellipse cx="38.5" cy="95.4" rx="3.3" ry="3.2" fill="#9aa442"/><ellipse cx="34.2" cy="72.2" rx="6.6" ry="4.0" fill="#bfae44"/><ellipse cx="26.9" cy="47.5" rx="8.7" ry="8.0" fill="#5a5220"/><ellipse cx="105.1" cy="81.5" rx="3.8" ry="2.6" fill="#b8862e"/><ellipse cx="92.3" cy="73.8" rx="7.9" ry="6.7" fill="#8e8a30"/><ellipse cx="37.7" cy="32.0" rx="5.2" ry="4.2" fill="#bfae44"/><ellipse cx="45.0" cy="16.0" rx="5.4" ry="4.3" fill="#a9a23c"/><ellipse cx="62.6" cy="16.1" rx="5.6" ry="5.5" fill="#bfae44"/><ellipse cx="30.5" cy="8.4" rx="3.6" ry="3.6" fill="#b8862e"/><ellipse cx="111.8" cy="17.3" rx="3.8" ry="3.2" fill="#b8862e"/><ellipse cx="77.5" cy="74.8" rx="8.1" ry="7.4" fill="#bfae44"/><ellipse cx="33.8" cy="27.9" rx="4.6" ry="4.1" fill="#c99a36"/><ellipse cx="22.9" cy="24.7" rx="4.5" ry="3.2" fill="#8e8a30"/><ellipse cx="104.4" cy="18.8" rx="3.4" ry="3.4" fill="#c99a36"/><ellipse cx="58.3" cy="23.1" rx="7.9" ry="7.8" fill="#b8862e"/><ellipse cx="11.8" cy="47.5" rx="7.9" ry="7.6" fill="#b8862e"/><ellipse cx="4.6" cy="29.4" rx="3.7" ry="3.1" fill="#6e6a26"/><ellipse cx="95.2" cy="19.4" rx="3.5" ry="3.3" fill="#d2b552"/><ellipse cx="51.6" cy="26.0" rx="7.7" ry="4.9" fill="#a9a23c"/><ellipse cx="68.6" cy="62.0" rx="4.3" ry="3.2" fill="#9aa442"/><ellipse cx="5.1" cy="100.0" rx="3.2" ry="3.0" fill="#6e6a26"/><ellipse cx="94.2" cy="40.9" rx="5.2" ry="3.3" fill="#c99a36"/><ellipse cx="3.6" cy="49.6" rx="5.9" ry="3.8" fill="#5a5220"/><ellipse cx="45.5" cy="55.0" rx="6.8" ry="5.9" fill="#bfae44"/><ellipse cx="45.7" cy="27.1" rx="8.9" ry="6.9" fill="#c99a36"/><ellipse cx="5.9" cy="74.5" rx="8.3" ry="6.4" fill="#5a5220"/><ellipse cx="99.4" cy="99.7" rx="5.2" ry="3.9" fill="#6e6a26"/><ellipse cx="46.6" cy="94.2" rx="5.6" ry="4.3" fill="#8e8a30"/><ellipse cx="94.3" cy="40.6" rx="8.3" ry="7.5" fill="#b8862e"/><ellipse cx="14.9" cy="5.2" rx="3.9" ry="2.5" fill="#5a5220"/><ellipse cx="71.6" cy="37.1" rx="6.0" ry="4.5" fill="#8e8a30"/><ellipse cx="18.6" cy="17.2" rx="3.4" ry="2.7" fill="#5a5220"/><ellipse cx="92.6" cy="96.7" rx="4.2" ry="3.9" fill="#8e8a30"/><ellipse cx="5.0" cy="91.3" rx="4.9" ry="3.1" fill="#5a5220"/><ellipse cx="81.9" cy="68.8" rx="8.3" ry="7.1" fill="#6e6a26"/><ellipse cx="70.7" cy="19.6" rx="5.8" ry="3.6" fill="#6e6a26"/><ellipse cx="107.9" cy="15.6" rx="5.2" ry="3.6" fill="#8e8a30"/><ellipse cx="83.4" cy="89.7" rx="3.2" ry="3.0" fill="#d2b552"/><ellipse cx="77.3" cy="66.8" rx="4.9" ry="4.2" fill="#5a5220"/><ellipse cx="63.3" cy="62.7" rx="4.8" ry="3.5" fill="#5a5220"/><ellipse cx="28.7" cy="38.9" rx="5.2" ry="4.0" fill="#d2b552"/><ellipse cx="2.7" cy="61.9" rx="5.9" ry="4.6" fill="#6e6a26"/><ellipse cx="71.1" cy="81.9" rx="8.0" ry="6.1" fill="#b8862e"/><ellipse cx="7.7" cy="35.9" rx="5.2" ry="4.2" fill="#b8862e"/><ellipse cx="75.6" cy="4.1" rx="3.8" ry="3.4" fill="#9aa442"/><ellipse cx="58.8" cy="5.4" rx="6.0" ry="5.2" fill="#5a5220"/><ellipse cx="90.2" cy="2.6" rx="3.4" ry="2.3" fill="#bfae44"/><ellipse cx="112.9" cy="49.2" rx="8.7" ry="7.6" fill="#8e8a30"/><ellipse cx="82.9" cy="22.1" rx="8.0" ry="5.3" fill="#c99a36"/><ellipse cx="103.1" cy="27.5" rx="7.9" ry="5.5" fill="#8e8a30"/><ellipse cx="110.9" cy="48.0" rx="6.6" ry="4.6" fill="#d2b552"/><ellipse cx="42.8" cy="19.9" rx="5.4" ry="4.7" fill="#c99a36"/><ellipse cx="103.0" cy="16.9" rx="7.7" ry="7.0" fill="#bfae44"/><ellipse cx="5.6" cy="85.8" rx="8.8" ry="7.2" fill="#b8862e"/><ellipse cx="66.7" cy="88.3" rx="3.6" ry="3.1" fill="#d2b552"/><ellipse cx="45.3" cy="79.8" rx="4.6" ry="3.8" fill="#9aa442"/><ellipse cx="41.4" cy="76.5" rx="5.7" ry="4.8" fill="#8e8a30"/><ellipse cx="110.2" cy="29.6" rx="6.1" ry="5.2" fill="#c99a36"/><ellipse cx="113.2" cy="58.6" rx="7.0" ry="6.2" fill="#9aa442"/><ellipse cx="85.9" cy="22.2" rx="4.7" ry="3.6" fill="#5a5220"/><ellipse cx="41.9" cy="4.8" rx="5.9" ry="3.6" fill="#a9a23c"/><ellipse cx="0.3" cy="35.5" rx="3.6" ry="3.0" fill="#9aa442"/><ellipse cx="47.5" cy="30.1" rx="3.8" ry="3.2" fill="#9aa442"/><ellipse cx="54.6" cy="13.5" rx="8.6" ry="7.6" fill="#6e6a26"/><ellipse cx="51.8" cy="6.4" rx="3.9" ry="2.9" fill="#c99a36"/><ellipse cx="30.4" cy="1.1" rx="6.9" ry="6.6" fill="#d2b552"/><ellipse cx="68.4" cy="57.8" rx="6.6" ry="5.9" fill="#d2b552"/><ellipse cx="28.6" cy="90.4" rx="3.3" ry="2.0" fill="#d2b552"/><ellipse cx="21.4" cy="15.9" rx="8.5" ry="5.1" fill="#bfae44"/><ellipse cx="63.4" cy="94.1" rx="3.9" ry="3.1" fill="#6e6a26"/><ellipse cx="73.9" cy="64.8" rx="5.5" ry="4.4" fill="#8e8a30"/><ellipse cx="7.3" cy="62.6" rx="9.0" ry="7.9" fill="#b8862e"/><ellipse cx="0.7" cy="84.4" rx="7.5" ry="4.7" fill="#b8862e"/><ellipse cx="75.4" cy="17.5" rx="9.0" ry="6.2" fill="#c99a36"/><ellipse cx="4.5" cy="33.6" rx="7.5" ry="6.6" fill="#c99a36"/><ellipse cx="30.6" cy="55.4" rx="5.6" ry="5.6" fill="#d2b552"/><ellipse cx="34.0" cy="92.9" rx="8.4" ry="8.0" fill="#bfae44"/><ellipse cx="1.8" cy="26.0" rx="4.4" ry="4.3" fill="#6e6a26"/><ellipse cx="85.8" cy="32.7" rx="8.3" ry="7.0" fill="#9aa442"/><ellipse cx="43.6" cy="85.2" rx="8.5" ry="6.7" fill="#d2b552"/><ellipse cx="96.6" cy="69.8" rx="8.1" ry="8.0" fill="#5a5220"/><ellipse cx="26.9" cy="88.5" rx="7.7" ry="6.6" fill="#5a5220"/><ellipse cx="8.9" cy="91.1" rx="3.9" ry="2.5" fill="#a9a23c"/><ellipse cx="71.5" cy="16.2" rx="8.9" ry="5.4" fill="#a9a23c"/><ellipse cx="15.9" cy="64.4" rx="3.3" ry="2.9" fill="#bfae44"/><ellipse cx="7.6" cy="59.0" rx="5.2" ry="5.0" fill="#d2b552"/><ellipse cx="7.6" cy="86.8" rx="8.5" ry="5.5" fill="#5a5220"/><ellipse cx="23.7" cy="11.2" rx="3.2" ry="3.0" fill="#bfae44"/><ellipse cx="72.6" cy="28.7" rx="3.6" ry="3.3" fill="#bfae44"/><ellipse cx="74.3" cy="29.4" rx="5.0" ry="3.1" fill="#c99a36"/><ellipse cx="29.5" cy="28.3" rx="7.3" ry="7.0" fill="#9aa442"/><ellipse cx="88.5" cy="60.2" rx="5.9" ry="5.0" fill="#c99a36"/><ellipse cx="3.6" cy="41.3" rx="5.6" ry="4.2" fill="#bfae44"/><ellipse cx="81.0" cy="53.8" rx="4.3" ry="3.6" fill="#bfae44"/><ellipse cx="33.0" cy="43.6" rx="6.1" ry="5.6" fill="#c99a36"/><ellipse cx="112.5" cy="0.4" rx="5.9" ry="5.2" fill="#b8862e"/><ellipse cx="94.9" cy="96.7" rx="6.6" ry="4.6" fill="#d2b552"/><ellipse cx="108.5" cy="28.4" rx="4.3" ry="3.4" fill="#6e6a26"/><ellipse cx="12.6" cy="63.7" rx="3.5" ry="3.2" fill="#d2b552"/><ellipse cx="72.2" cy="116.7" rx="5.0" ry="4.8" fill="#c8a848"/><ellipse cx="85.7" cy="121.7" rx="6.2" ry="4.3" fill="#8a5a24"/><ellipse cx="30.3" cy="157.6" rx="5.5" ry="5.5" fill="#c8a848"/><ellipse cx="72.5" cy="160.8" rx="3.6" ry="2.7" fill="#c07a2c"/><ellipse cx="37.6" cy="101.6" rx="7.2" ry="4.8" fill="#8a5a24"/><ellipse cx="50.5" cy="148.0" rx="5.9" ry="4.3" fill="#a88a30"/><ellipse cx="73.9" cy="142.2" rx="5.5" ry="4.0" fill="#6a6a28"/><ellipse cx="80.9" cy="153.3" rx="3.8" ry="3.7" fill="#a88a30"/><ellipse cx="83.2" cy="135.2" rx="4.7" ry="3.5" fill="#d09a40"/><ellipse cx="21.8" cy="163.1" rx="6.6" ry="4.4" fill="#b5652a"/><ellipse cx="75.7" cy="104.7" rx="3.8" ry="3.4" fill="#a88a30"/><ellipse cx="84.3" cy="122.6" rx="4.0" ry="2.8" fill="#b5652a"/><ellipse cx="101.8" cy="124.8" rx="3.1" ry="2.7" fill="#c8a848"/><ellipse cx="57.6" cy="137.4" rx="5.3" ry="3.7" fill="#a88a30"/><ellipse cx="84.9" cy="90.4" rx="4.2" ry="3.7" fill="#c8a848"/><ellipse cx="67.6" cy="138.5" rx="7.2" ry="6.3" fill="#d09a40"/><ellipse cx="73.8" cy="124.0" rx="4.6" ry="4.4" fill="#b5652a"/><ellipse cx="27.9" cy="120.0" rx="6.6" ry="4.6" fill="#a88a30"/><ellipse cx="48.7" cy="124.1" rx="6.1" ry="4.9" fill="#c8a848"/><ellipse cx="76.0" cy="155.5" rx="7.5" ry="6.8" fill="#8a5a24"/><ellipse cx="44.7" cy="126.7" rx="7.9" ry="5.5" fill="#c07a2c"/><ellipse cx="25.1" cy="143.7" rx="7.8" ry="6.3" fill="#d09a40"/><ellipse cx="11.6" cy="133.1" rx="5.7" ry="4.6" fill="#7a8a34"/><ellipse cx="73.5" cy="152.2" rx="5.6" ry="5.0" fill="#c8a848"/><ellipse cx="52.5" cy="164.3" rx="3.9" ry="3.5" fill="#b5652a"/><ellipse cx="70.6" cy="137.8" rx="4.3" ry="3.2" fill="#c8a848"/><ellipse cx="1.5" cy="121.4" rx="5.1" ry="4.2" fill="#8a5a24"/><ellipse cx="12.6" cy="112.8" rx="5.0" ry="5.0" fill="#d09a40"/><ellipse cx="110.5" cy="124.7" rx="3.8" ry="3.5" fill="#b5652a"/><ellipse cx="72.9" cy="125.2" rx="5.8" ry="5.4" fill="#d09a40"/><ellipse cx="16.8" cy="140.0" rx="7.2" ry="5.6" fill="#c8a848"/><ellipse cx="33.8" cy="131.1" rx="3.6" ry="2.7" fill="#7a8a34"/><ellipse cx="97.8" cy="110.1" rx="4.9" ry="4.8" fill="#6a6a28"/><ellipse cx="78.1" cy="126.1" rx="7.0" ry="5.2" fill="#6a6a28"/><ellipse cx="75.3" cy="114.0" rx="5.4" ry="4.7" fill="#b5652a"/><ellipse cx="41.7" cy="159.7" rx="7.3" ry="4.6" fill="#c07a2c"/><ellipse cx="64.9" cy="114.4" rx="7.7" ry="6.6" fill="#8a5a24"/><ellipse cx="1.7" cy="90.9" rx="7.8" ry="5.4" fill="#6a6a28"/><ellipse cx="11.7" cy="100.7" rx="4.2" ry="3.1" fill="#7a8a34"/><ellipse cx="17.6" cy="157.8" rx="7.0" ry="5.9" fill="#a88a30"/><ellipse cx="79.1" cy="163.3" rx="3.5" ry="2.3" fill="#6a6a28"/><ellipse cx="79.7" cy="129.8" rx="6.7" ry="5.8" fill="#7a8a34"/><ellipse cx="13.5" cy="98.9" rx="5.1" ry="4.0" fill="#a88a30"/><ellipse cx="64.1" cy="126.3" rx="7.5" ry="5.3" fill="#7a8a34"/><ellipse cx="18.9" cy="135.0" rx="6.7" ry="6.2" fill="#a88a30"/><ellipse cx="53.8" cy="132.2" rx="6.3" ry="4.7" fill="#7a8a34"/><ellipse cx="48.2" cy="162.0" rx="3.4" ry="2.9" fill="#8a5a24"/><ellipse cx="3.3" cy="135.7" rx="6.4" ry="5.9" fill="#8a5a24"/><ellipse cx="10.8" cy="126.3" rx="6.8" ry="4.2" fill="#a88a30"/><ellipse cx="82.6" cy="136.9" rx="4.7" ry="3.5" fill="#8a5a24"/><ellipse cx="89.5" cy="131.6" rx="7.6" ry="5.9" fill="#6a6a28"/><ellipse cx="48.6" cy="131.6" rx="7.1" ry="5.3" fill="#6a6a28"/><ellipse cx="56.8" cy="115.0" rx="7.9" ry="7.8" fill="#8a5a24"/><ellipse cx="75.3" cy="149.4" rx="4.7" ry="4.1" fill="#8a5a24"/><ellipse cx="14.7" cy="163.0" rx="3.4" ry="2.6" fill="#c07a2c"/><ellipse cx="63.7" cy="120.5" rx="5.9" ry="4.2" fill="#c8a848"/><ellipse cx="0.7" cy="104.2" rx="7.6" ry="7.0" fill="#c07a2c"/><ellipse cx="104.6" cy="135.9" rx="6.1" ry="4.2" fill="#b5652a"/><ellipse cx="76.7" cy="124.3" rx="6.8" ry="5.9" fill="#b5652a"/><ellipse cx="100.0" cy="121.6" rx="3.5" ry="2.6" fill="#c07a2c"/><ellipse cx="94.6" cy="149.0" rx="5.8" ry="5.5" fill="#6a6a28"/><ellipse cx="21.2" cy="92.6" rx="3.1" ry="2.5" fill="#c07a2c"/><ellipse cx="60.0" cy="151.9" rx="6.9" ry="5.7" fill="#c8a848"/><ellipse cx="105.6" cy="123.5" rx="3.1" ry="2.6" fill="#c8a848"/><ellipse cx="114.2" cy="139.5" rx="3.8" ry="3.1" fill="#c8a848"/><ellipse cx="9.5" cy="125.4" rx="7.5" ry="5.8" fill="#c07a2c"/><ellipse cx="1.1" cy="140.2" rx="7.9" ry="5.5" fill="#b5652a"/><ellipse cx="14.0" cy="125.4" rx="4.4" ry="3.4" fill="#d09a40"/><ellipse cx="85.6" cy="159.2" rx="4.8" ry="4.3" fill="#a88a30"/><ellipse cx="9.7" cy="137.1" rx="6.5" ry="5.7" fill="#7a8a34"/><ellipse cx="102.4" cy="158.5" rx="3.3" ry="2.0" fill="#c07a2c"/><ellipse cx="1.7" cy="138.8" rx="7.1" ry="5.4" fill="#b5652a"/><ellipse cx="35.9" cy="135.0" rx="7.8" ry="6.6" fill="#7a8a34"/><ellipse cx="36.4" cy="161.2" rx="6.6" ry="5.8" fill="#7a8a34"/><ellipse cx="16.7" cy="149.8" rx="4.8" ry="4.1" fill="#a88a30"/><ellipse cx="48.1" cy="118.9" rx="6.9" ry="6.3" fill="#6a6a28"/><ellipse cx="65.2" cy="111.9" rx="3.3" ry="3.1" fill="#8a5a24"/><ellipse cx="83.5" cy="91.2" rx="3.8" ry="3.1" fill="#6a6a28"/><ellipse cx="112.3" cy="108.5" rx="4.9" ry="4.2" fill="#c8a848"/><ellipse cx="103.1" cy="150.6" rx="4.4" ry="3.2" fill="#c07a2c"/><ellipse cx="30.8" cy="101.8" rx="7.6" ry="5.4" fill="#c07a2c"/><ellipse cx="16.2" cy="156.8" rx="8.0" ry="5.7" fill="#a88a30"/><ellipse cx="97.9" cy="150.5" rx="6.4" ry="4.7" fill="#7a8a34"/><ellipse cx="9.8" cy="131.5" rx="7.0" ry="6.4" fill="#d09a40"/><ellipse cx="83.1" cy="163.7" rx="4.5" ry="4.0" fill="#c07a2c"/><ellipse cx="53.5" cy="105.5" rx="4.3" ry="3.9" fill="#c07a2c"/><ellipse cx="52.9" cy="96.6" rx="7.0" ry="4.9" fill="#b5652a"/><ellipse cx="66.7" cy="157.3" rx="7.4" ry="5.9" fill="#8a5a24"/><ellipse cx="67.8" cy="104.2" rx="4.0" ry="3.7" fill="#a88a30"/><ellipse cx="33.3" cy="133.3" rx="4.8" ry="3.3" fill="#a88a30"/><ellipse cx="106.1" cy="127.0" rx="7.3" ry="6.3" fill="#8a5a24"/><ellipse cx="90.5" cy="101.7" rx="6.0" ry="4.3" fill="#8a5a24"/><ellipse cx="69.8" cy="97.1" rx="4.0" ry="3.4" fill="#7a8a34"/><ellipse cx="24.6" cy="159.4" rx="4.4" ry="4.3" fill="#b5652a"/><ellipse cx="88.2" cy="151.4" rx="7.8" ry="7.3" fill="#6a6a28"/><ellipse cx="39.0" cy="164.6" rx="4.9" ry="3.0" fill="#c07a2c"/><ellipse cx="64.1" cy="155.3" rx="5.3" ry="5.0" fill="#b5652a"/><ellipse cx="73.6" cy="159.2" rx="6.5" ry="4.6" fill="#b5652a"/><ellipse cx="64.9" cy="138.0" rx="7.8" ry="5.2" fill="#c8a848"/><ellipse cx="97.7" cy="117.8" rx="4.2" ry="2.8" fill="#d09a40"/><ellipse cx="108.3" cy="160.6" rx="3.3" ry="3.1" fill="#c07a2c"/><ellipse cx="5.4" cy="149.0" rx="6.5" ry="4.1" fill="#7a8a34"/><ellipse cx="16.7" cy="146.6" rx="7.7" ry="6.4" fill="#6a6a28"/><ellipse cx="50.7" cy="138.9" rx="5.4" ry="3.8" fill="#8a5a24"/><ellipse cx="14.3" cy="126.1" rx="3.8" ry="3.5" fill="#d09a40"/><ellipse cx="105.1" cy="156.9" rx="5.3" ry="4.9" fill="#d09a40"/><ellipse cx="18.0" cy="152.5" rx="3.4" ry="3.2" fill="#8a5a24"/><ellipse cx="16.1" cy="123.5" rx="3.5" ry="3.3" fill="#c8a848"/><ellipse cx="72.3" cy="123.9" rx="4.7" ry="3.7" fill="#d09a40"/><ellipse cx="72.2" cy="100.7" rx="4.1" ry="2.8" fill="#c07a2c"/><ellipse cx="51.9" cy="156.7" rx="5.2" ry="3.7" fill="#a88a30"/><ellipse cx="47.4" cy="101.7" rx="4.4" ry="3.2" fill="#6a6a28"/><ellipse cx="19.3" cy="126.8" rx="4.6" ry="3.0" fill="#7a8a34"/><ellipse cx="112.5" cy="94.3" rx="7.5" ry="6.2" fill="#d09a40"/><ellipse cx="96.1" cy="98.9" rx="6.8" ry="5.2" fill="#8a5a24"/><ellipse cx="30.1" cy="107.9" rx="4.2" ry="3.0" fill="#c8a848"/><ellipse cx="103.1" cy="94.3" rx="6.6" ry="4.4" fill="#6a6a28"/><ellipse cx="73.6" cy="123.2" rx="5.5" ry="4.3" fill="#a88a30"/><ellipse cx="90.8" cy="160.8" rx="4.4" ry="3.4" fill="#8a5a24"/><ellipse cx="104.9" cy="106.4" rx="5.9" ry="5.5" fill="#a88a30"/><ellipse cx="60.0" cy="107.3" rx="3.9" ry="3.6" fill="#b5652a"/><ellipse cx="102.3" cy="144.8" rx="6.8" ry="4.6" fill="#a88a30"/><ellipse cx="70.4" cy="143.1" rx="7.1" ry="4.8" fill="#6a6a28"/><ellipse cx="7.6" cy="145.0" rx="5.0" ry="4.1" fill="#c07a2c"/><ellipse cx="40.0" cy="111.1" rx="6.2" ry="3.9" fill="#7a8a34"/><ellipse cx="47.1" cy="147.2" rx="3.7" ry="2.6" fill="#6a6a28"/><ellipse cx="64.8" cy="163.9" rx="3.2" ry="2.6" fill="#8a5a24"/><ellipse cx="98.7" cy="116.7" rx="7.7" ry="5.0" fill="#b5652a"/><ellipse cx="82.2" cy="151.2" rx="7.3" ry="6.7" fill="#8a5a24"/><ellipse cx="99.8" cy="133.2" rx="7.5" ry="7.1" fill="#6a6a28"/><ellipse cx="109.7" cy="127.1" rx="5.6" ry="3.4" fill="#a88a30"/><ellipse cx="111.3" cy="106.8" rx="3.9" ry="2.8" fill="#b5652a"/><ellipse cx="63.9" cy="161.7" rx="3.1" ry="2.2" fill="#d09a40"/><ellipse cx="96.3" cy="137.8" rx="5.3" ry="4.7" fill="#d09a40"/><ellipse cx="11.8" cy="155.2" rx="6.6" ry="4.7" fill="#c07a2c"/><ellipse cx="53.5" cy="133.9" rx="6.8" ry="4.4" fill="#b5652a"/><ellipse cx="46.6" cy="100.3" rx="6.0" ry="3.9" fill="#d09a40"/><ellipse cx="65.9" cy="146.0" rx="3.8" ry="3.7" fill="#c07a2c"/><ellipse cx="44.7" cy="121.5" rx="7.2" ry="5.5" fill="#c07a2c"/><ellipse cx="108.2" cy="148.3" rx="4.7" ry="4.4" fill="#d09a40"/><ellipse cx="82.3" cy="153.2" rx="5.8" ry="5.4" fill="#8a5a24"/><ellipse cx="97.5" cy="94.0" rx="5.6" ry="3.9" fill="#8a5a24"/><ellipse cx="48.5" cy="137.5" rx="4.8" ry="3.0" fill="#a88a30"/><ellipse cx="49.8" cy="127.9" rx="3.1" ry="2.4" fill="#a88a30"/><ellipse cx="45.7" cy="164.8" rx="5.3" ry="4.9" fill="#c07a2c"/><ellipse cx="101.7" cy="156.3" rx="3.2" ry="3.1" fill="#6a6a28"/><ellipse cx="71.7" cy="137.1" rx="7.0" ry="6.0" fill="#c07a2c"/><ellipse cx="28.8" cy="129.0" rx="5.2" ry="3.7" fill="#c07a2c"/><ellipse cx="35.1" cy="138.6" rx="3.6" ry="2.3" fill="#6a6a28"/><ellipse cx="67.9" cy="159.9" rx="5.2" ry="5.0" fill="#a88a30"/><ellipse cx="105.3" cy="133.3" rx="4.4" ry="3.9" fill="#b5652a"/><ellipse cx="33.0" cy="124.1" rx="6.5" ry="5.6" fill="#d09a40"/><ellipse cx="23.1" cy="143.3" rx="5.3" ry="4.5" fill="#6a6a28"/><ellipse cx="53.9" cy="113.3" rx="4.2" ry="2.8" fill="#d09a40"/><ellipse cx="62.8" cy="162.7" rx="5.0" ry="3.3" fill="#8a5a24"/><ellipse cx="109.5" cy="114.3" rx="4.6" ry="3.3" fill="#6a6a28"/><ellipse cx="113.6" cy="112.2" rx="6.9" ry="5.6" fill="#a88a30"/><ellipse cx="69.7" cy="116.1" rx="6.3" ry="5.9" fill="#c8a848"/><ellipse cx="40.7" cy="147.2" rx="5.6" ry="4.3" fill="#a88a30"/><ellipse cx="76.8" cy="100.5" rx="4.0" ry="3.7" fill="#6a6a28"/>
<g stroke="#3a3016" stroke-width="2" fill="none" opacity="0.55"><path d="M42,150 L44,95 L32,45"/><path d="M52,148 L57,85 L72,35"/><path d="M84,140 L86,75 L92,35"/></g></g>
<g clip-path="url(#rtree)"><rect width="200" height="200" fill="#8a8a34"/><ellipse cx="159.0" cy="125.6" rx="7.5" ry="5.3" fill="#9a7a2c"/><ellipse cx="168.6" cy="107.5" rx="7.2" ry="6.8" fill="#d0a040"/><ellipse cx="115.4" cy="130.2" rx="6.5" ry="4.9" fill="#9a7a2c"/><ellipse cx="199.4" cy="25.4" rx="8.1" ry="7.7" fill="#b8a442"/><ellipse cx="166.6" cy="64.5" rx="5.7" ry="4.1" fill="#9a7a2c"/><ellipse cx="145.0" cy="60.0" rx="6.2" ry="5.3" fill="#d0a040"/><ellipse cx="115.6" cy="126.8" rx="8.9" ry="7.0" fill="#d0a040"/><ellipse cx="130.7" cy="51.7" rx="3.9" ry="3.2" fill="#d0a040"/><ellipse cx="122.5" cy="156.4" rx="4.9" ry="4.9" fill="#c08a30"/><ellipse cx="132.4" cy="72.5" rx="8.5" ry="5.2" fill="#8a9a38"/><ellipse cx="136.8" cy="152.3" rx="4.8" ry="3.9" fill="#b8a442"/><ellipse cx="199.9" cy="88.0" rx="6.1" ry="4.6" fill="#d0a040"/><ellipse cx="145.4" cy="101.1" rx="5.1" ry="4.4" fill="#8a9a38"/><ellipse cx="159.6" cy="16.8" rx="5.2" ry="4.5" fill="#d0a040"/><ellipse cx="193.9" cy="26.2" rx="4.1" ry="3.3" fill="#d0a040"/><ellipse cx="152.4" cy="106.2" rx="9.0" ry="7.9" fill="#5e7028"/><ellipse cx="178.4" cy="15.7" rx="5.2" ry="5.1" fill="#5e7028"/><ellipse cx="185.2" cy="87.1" rx="3.7" ry="3.2" fill="#b8a442"/><ellipse cx="184.7" cy="168.3" rx="8.3" ry="7.1" fill="#d0a040"/><ellipse cx="159.5" cy="138.7" rx="4.2" ry="3.2" fill="#c08a30"/><ellipse cx="120.1" cy="96.0" rx="3.6" ry="3.2" fill="#8a9a38"/><ellipse cx="115.9" cy="0.5" rx="7.3" ry="7.0" fill="#8a9a38"/><ellipse cx="148.8" cy="16.7" rx="3.1" ry="2.1" fill="#8a9a38"/><ellipse cx="157.3" cy="94.1" rx="4.6" ry="3.8" fill="#6e8230"/><ellipse cx="149.9" cy="20.7" rx="3.9" ry="2.4" fill="#a2a640"/><ellipse cx="121.5" cy="161.1" rx="5.9" ry="5.0" fill="#9a7a2c"/><ellipse cx="183.6" cy="10.6" rx="3.1" ry="2.0" fill="#5e7028"/><ellipse cx="135.3" cy="46.8" rx="3.2" ry="3.0" fill="#a2a640"/><ellipse cx="195.6" cy="10.7" rx="4.1" ry="2.5" fill="#d0a040"/><ellipse cx="133.7" cy="67.3" rx="7.6" ry="5.9" fill="#8a9a38"/><ellipse cx="167.7" cy="42.4" rx="3.3" ry="2.4" fill="#6e8230"/><ellipse cx="191.4" cy="138.7" rx="4.8" ry="4.7" fill="#b8a442"/><ellipse cx="157.1" cy="161.5" rx="4.5" ry="3.9" fill="#d0a040"/><ellipse cx="164.7" cy="70.3" rx="5.4" ry="3.3" fill="#9a7a2c"/><ellipse cx="188.8" cy="14.9" rx="4.0" ry="2.7" fill="#d0a040"/><ellipse cx="197.6" cy="49.4" rx="6.4" ry="4.7" fill="#a2a640"/><ellipse cx="189.1" cy="57.1" rx="6.9" ry="5.3" fill="#a2a640"/><ellipse cx="192.6" cy="94.2" rx="5.3" ry="3.8" fill="#9a7a2c"/><ellipse cx="135.2" cy="5.9" rx="7.0" ry="6.4" fill="#5e7028"/><ellipse cx="135.6" cy="22.1" rx="4.2" ry="3.4" fill="#6e8230"/><ellipse cx="154.7" cy="135.1" rx="4.4" ry="3.3" fill="#5e7028"/><ellipse cx="176.4" cy="64.1" rx="8.8" ry="6.3" fill="#c08a30"/><ellipse cx="155.5" cy="34.8" rx="8.2" ry="8.0" fill="#6e8230"/><ellipse cx="199.8" cy="101.3" rx="5.6" ry="4.6" fill="#5e7028"/><ellipse cx="149.4" cy="86.7" rx="3.8" ry="3.3" fill="#a2a640"/><ellipse cx="122.8" cy="144.8" rx="7.4" ry="4.5" fill="#d0a040"/><ellipse cx="176.0" cy="24.7" rx="3.1" ry="2.7" fill="#a2a640"/><ellipse cx="181.0" cy="39.4" rx="4.1" ry="2.6" fill="#a2a640"/><ellipse cx="192.7" cy="136.9" rx="7.6" ry="4.7" fill="#c08a30"/><ellipse cx="141.5" cy="38.5" rx="3.8" ry="2.7" fill="#d0a040"/><ellipse cx="149.3" cy="154.5" rx="7.6" ry="7.5" fill="#6e8230"/><ellipse cx="130.0" cy="62.3" rx="7.8" ry="7.5" fill="#5e7028"/><ellipse cx="117.1" cy="119.6" rx="5.8" ry="4.3" fill="#d0a040"/><ellipse cx="168.5" cy="30.9" rx="3.7" ry="3.3" fill="#c08a30"/><ellipse cx="118.4" cy="6.8" rx="4.0" ry="3.6" fill="#c08a30"/><ellipse cx="128.3" cy="125.5" rx="6.3" ry="5.2" fill="#6e8230"/><ellipse cx="134.4" cy="84.6" rx="6.1" ry="5.3" fill="#d0a040"/><ellipse cx="163.9" cy="159.1" rx="3.7" ry="3.5" fill="#b8a442"/><ellipse cx="189.4" cy="99.5" rx="7.2" ry="6.3" fill="#c08a30"/><ellipse cx="118.2" cy="54.2" rx="7.7" ry="6.9" fill="#5e7028"/><ellipse cx="122.3" cy="118.1" rx="5.4" ry="3.8" fill="#c08a30"/><ellipse cx="122.6" cy="160.9" rx="5.5" ry="4.9" fill="#5e7028"/><ellipse cx="177.8" cy="141.1" rx="6.8" ry="5.4" fill="#9a7a2c"/><ellipse cx="172.5" cy="35.0" rx="7.0" ry="5.6" fill="#6e8230"/><ellipse cx="131.1" cy="161.9" rx="8.0" ry="5.3" fill="#b8a442"/><ellipse cx="128.9" cy="132.7" rx="4.4" ry="3.1" fill="#b8a442"/><ellipse cx="120.0" cy="60.8" rx="5.5" ry="4.7" fill="#c08a30"/><ellipse cx="126.7" cy="116.7" rx="5.9" ry="4.1" fill="#9a7a2c"/><ellipse cx="135.5" cy="87.6" rx="5.7" ry="5.0" fill="#5e7028"/><ellipse cx="126.3" cy="120.3" rx="6.5" ry="4.8" fill="#c08a30"/><ellipse cx="184.3" cy="93.2" rx="7.6" ry="6.6" fill="#6e8230"/><ellipse cx="128.2" cy="166.5" rx="8.0" ry="7.5" fill="#d0a040"/><ellipse cx="124.7" cy="49.2" rx="5.2" ry="3.2" fill="#c08a30"/><ellipse cx="191.1" cy="51.7" rx="3.7" ry="2.9" fill="#b8a442"/><ellipse cx="124.6" cy="55.2" rx="5.8" ry="4.2" fill="#5e7028"/><ellipse cx="162.4" cy="7.7" rx="5.8" ry="3.7" fill="#9a7a2c"/><ellipse cx="176.0" cy="166.6" rx="6.4" ry="5.5" fill="#a2a640"/><ellipse cx="196.3" cy="83.0" rx="7.7" ry="4.6" fill="#5e7028"/><ellipse cx="193.2" cy="109.6" rx="6.8" ry="5.8" fill="#b8a442"/><ellipse cx="121.6" cy="127.1" rx="3.2" ry="2.9" fill="#d0a040"/><ellipse cx="140.2" cy="31.6" rx="6.8" ry="4.4" fill="#6e8230"/><ellipse cx="176.1" cy="52.8" rx="6.7" ry="4.5" fill="#d0a040"/><ellipse cx="185.2" cy="54.4" rx="5.2" ry="4.9" fill="#5e7028"/><ellipse cx="136.6" cy="9.8" rx="3.6" ry="3.5" fill="#d0a040"/><ellipse cx="195.3" cy="84.0" rx="6.0" ry="6.0" fill="#6e8230"/><ellipse cx="166.2" cy="106.5" rx="3.9" ry="2.6" fill="#c08a30"/><ellipse cx="152.7" cy="164.9" rx="3.5" ry="3.3" fill="#8a9a38"/><ellipse cx="155.7" cy="37.1" rx="5.2" ry="4.9" fill="#8a9a38"/><ellipse cx="187.7" cy="133.8" rx="5.6" ry="3.5" fill="#b8a442"/><ellipse cx="119.7" cy="120.8" rx="8.3" ry="6.5" fill="#a2a640"/><ellipse cx="171.6" cy="140.4" rx="8.4" ry="6.3" fill="#6e8230"/><ellipse cx="115.4" cy="136.7" rx="7.1" ry="5.6" fill="#c08a30"/><ellipse cx="161.1" cy="87.9" rx="5.6" ry="5.5" fill="#6e8230"/><ellipse cx="196.8" cy="105.4" rx="7.9" ry="7.0" fill="#8a9a38"/><ellipse cx="143.2" cy="111.9" rx="6.4" ry="6.3" fill="#d0a040"/><ellipse cx="155.9" cy="110.1" rx="4.8" ry="3.9" fill="#5e7028"/><ellipse cx="168.9" cy="144.2" rx="4.3" ry="3.8" fill="#9a7a2c"/><ellipse cx="127.5" cy="98.4" rx="6.3" ry="4.7" fill="#d0a040"/><ellipse cx="135.4" cy="75.0" rx="4.6" ry="3.1" fill="#c08a30"/><ellipse cx="190.6" cy="93.2" rx="3.7" ry="3.2" fill="#b8a442"/><ellipse cx="130.9" cy="113.9" rx="7.3" ry="6.0" fill="#c08a30"/><ellipse cx="134.3" cy="97.4" rx="3.7" ry="3.5" fill="#a2a640"/><ellipse cx="172.8" cy="136.1" rx="3.8" ry="3.2" fill="#a2a640"/><ellipse cx="196.6" cy="87.6" rx="5.8" ry="4.7" fill="#d0a040"/><ellipse cx="197.3" cy="32.6" rx="5.9" ry="3.8" fill="#a2a640"/><ellipse cx="181.0" cy="9.8" rx="4.4" ry="2.7" fill="#5e7028"/><ellipse cx="174.7" cy="162.5" rx="5.8" ry="5.1" fill="#a2a640"/><ellipse cx="151.2" cy="151.1" rx="6.7" ry="5.6" fill="#c08a30"/><ellipse cx="193.0" cy="148.0" rx="4.0" ry="3.7" fill="#5e7028"/><ellipse cx="177.6" cy="2.0" rx="4.5" ry="3.4" fill="#c08a30"/><ellipse cx="177.7" cy="161.2" rx="7.3" ry="6.8" fill="#8a9a38"/><ellipse cx="145.0" cy="60.5" rx="5.0" ry="3.0" fill="#a2a640"/><ellipse cx="192.4" cy="41.2" rx="5.1" ry="3.1" fill="#9a7a2c"/><ellipse cx="199.0" cy="74.8" rx="7.7" ry="5.0" fill="#9a7a2c"/><ellipse cx="183.1" cy="31.5" rx="6.3" ry="6.0" fill="#b8a442"/><ellipse cx="171.9" cy="142.2" rx="6.5" ry="5.3" fill="#b8a442"/><ellipse cx="173.6" cy="137.4" rx="8.7" ry="5.3" fill="#8a9a38"/><ellipse cx="199.5" cy="82.8" rx="5.9" ry="5.4" fill="#8a9a38"/><ellipse cx="118.0" cy="31.0" rx="7.9" ry="7.4" fill="#d0a040"/><ellipse cx="197.2" cy="117.8" rx="5.7" ry="5.4" fill="#c08a30"/><ellipse cx="166.9" cy="12.9" rx="5.0" ry="3.6" fill="#c08a30"/><ellipse cx="126.1" cy="106.2" rx="4.3" ry="3.8" fill="#5e7028"/><ellipse cx="143.2" cy="79.6" rx="8.6" ry="5.2" fill="#5e7028"/><ellipse cx="164.2" cy="56.7" rx="3.1" ry="3.0" fill="#9a7a2c"/><ellipse cx="166.7" cy="107.2" rx="7.4" ry="5.2" fill="#6e8230"/><ellipse cx="138.2" cy="85.0" rx="4.6" ry="4.6" fill="#6e8230"/><ellipse cx="117.9" cy="95.3" rx="7.6" ry="6.9" fill="#c08a30"/><ellipse cx="168.8" cy="107.9" rx="5.2" ry="4.7" fill="#b8a442"/><ellipse cx="135.2" cy="135.4" rx="3.8" ry="2.8" fill="#a2a640"/><ellipse cx="179.9" cy="125.7" rx="6.1" ry="4.5" fill="#c08a30"/><ellipse cx="161.8" cy="69.0" rx="3.4" ry="2.9" fill="#5e7028"/><ellipse cx="190.1" cy="133.0" rx="6.0" ry="5.6" fill="#c08a30"/><ellipse cx="199.7" cy="25.6" rx="4.2" ry="3.2" fill="#9a7a2c"/><ellipse cx="148.7" cy="131.3" rx="8.6" ry="5.6" fill="#a2a640"/><ellipse cx="176.2" cy="42.9" rx="6.4" ry="4.0" fill="#5e7028"/><ellipse cx="131.2" cy="157.2" rx="6.5" ry="5.4" fill="#b8a442"/><ellipse cx="198.9" cy="60.7" rx="7.6" ry="6.8" fill="#d0a040"/><ellipse cx="193.4" cy="142.6" rx="4.9" ry="3.5" fill="#6e8230"/><ellipse cx="136.9" cy="3.9" rx="4.0" ry="2.8" fill="#b8a442"/><ellipse cx="116.7" cy="8.1" rx="5.7" ry="5.4" fill="#b8a442"/><ellipse cx="170.1" cy="33.4" rx="7.4" ry="6.2" fill="#6e8230"/><ellipse cx="121.7" cy="137.6" rx="8.3" ry="7.3" fill="#5e7028"/><ellipse cx="115.4" cy="46.0" rx="6.9" ry="5.9" fill="#8a9a38"/><ellipse cx="193.4" cy="36.1" rx="5.0" ry="4.3" fill="#8a9a38"/><ellipse cx="149.5" cy="115.4" rx="5.0" ry="4.8" fill="#8a9a38"/><ellipse cx="182.7" cy="14.8" rx="6.7" ry="6.6" fill="#9a7a2c"/><ellipse cx="149.0" cy="159.8" rx="8.2" ry="8.0" fill="#8a9a38"/><ellipse cx="163.0" cy="167.9" rx="3.3" ry="2.2" fill="#5e7028"/><ellipse cx="116.6" cy="35.8" rx="6.2" ry="4.6" fill="#a2a640"/><ellipse cx="145.7" cy="58.5" rx="7.1" ry="6.1" fill="#6e8230"/><ellipse cx="166.1" cy="56.2" rx="7.4" ry="6.9" fill="#b8a442"/><ellipse cx="155.6" cy="5.4" rx="6.9" ry="5.7" fill="#9a7a2c"/><ellipse cx="145.7" cy="90.0" rx="4.6" ry="2.8" fill="#b8a442"/><ellipse cx="155.4" cy="111.4" rx="7.6" ry="5.0" fill="#5e7028"/><ellipse cx="168.5" cy="68.1" rx="8.9" ry="7.5" fill="#8a9a38"/><ellipse cx="125.4" cy="92.4" rx="4.2" ry="3.0" fill="#6e8230"/><ellipse cx="166.5" cy="125.4" rx="8.4" ry="6.8" fill="#6e8230"/><ellipse cx="144.8" cy="120.6" rx="5.6" ry="3.9" fill="#9a7a2c"/><ellipse cx="192.6" cy="153.2" rx="5.3" ry="3.9" fill="#c08a30"/><ellipse cx="191.8" cy="18.3" rx="7.4" ry="6.8" fill="#a2a640"/><ellipse cx="192.7" cy="114.6" rx="5.1" ry="4.2" fill="#c08a30"/><ellipse cx="149.8" cy="156.3" rx="8.7" ry="5.3" fill="#c08a30"/><ellipse cx="116.8" cy="120.6" rx="4.5" ry="3.0" fill="#5e7028"/><ellipse cx="179.5" cy="109.3" rx="4.8" ry="3.3" fill="#9a7a2c"/><ellipse cx="163.4" cy="26.6" rx="8.2" ry="8.0" fill="#b8a442"/><ellipse cx="126.6" cy="51.0" rx="3.5" ry="2.8" fill="#8a9a38"/><ellipse cx="190.7" cy="27.5" rx="7.1" ry="4.9" fill="#9a7a2c"/><ellipse cx="119.4" cy="133.0" rx="8.1" ry="5.0" fill="#5e7028"/><ellipse cx="180.8" cy="74.6" rx="5.6" ry="5.6" fill="#6e8230"/><ellipse cx="140.3" cy="4.2" rx="3.7" ry="2.4" fill="#8a9a38"/><ellipse cx="140.7" cy="85.4" rx="5.1" ry="4.0" fill="#6e8230"/><ellipse cx="148.8" cy="70.4" rx="6.9" ry="6.5" fill="#d0a040"/><ellipse cx="198.3" cy="5.6" rx="4.4" ry="2.7" fill="#8a9a38"/><ellipse cx="157.9" cy="39.4" rx="5.6" ry="5.0" fill="#a2a640"/><ellipse cx="119.1" cy="152.0" rx="3.4" ry="2.2" fill="#a2a640"/><ellipse cx="156.4" cy="23.1" rx="5.6" ry="3.8" fill="#6e8230"/><ellipse cx="160.9" cy="107.6" rx="6.3" ry="5.1" fill="#a2a640"/><ellipse cx="186.4" cy="162.7" rx="3.5" ry="3.3" fill="#c08a30"/><ellipse cx="197.6" cy="38.1" rx="3.4" ry="2.1" fill="#6e8230"/><ellipse cx="137.9" cy="164.3" rx="4.2" ry="3.2" fill="#8a9a38"/><ellipse cx="162.3" cy="61.6" rx="3.1" ry="2.6" fill="#8a9a38"/><ellipse cx="161.2" cy="93.3" rx="7.1" ry="5.4" fill="#b8a442"/><ellipse cx="142.1" cy="71.3" rx="8.8" ry="8.0" fill="#d0a040"/><ellipse cx="189.9" cy="136.6" rx="8.4" ry="5.8" fill="#8a9a38"/><ellipse cx="157.6" cy="168.1" rx="7.2" ry="7.1" fill="#d0a040"/><ellipse cx="185.2" cy="112.8" rx="3.5" ry="3.4" fill="#8a9a38"/><ellipse cx="119.2" cy="118.0" rx="4.9" ry="4.1" fill="#9a7a2c"/><ellipse cx="141.8" cy="165.2" rx="3.0" ry="2.4" fill="#9a7a2c"/><ellipse cx="165.3" cy="169.1" rx="4.4" ry="3.3" fill="#d0a040"/><ellipse cx="120.5" cy="165.9" rx="4.6" ry="2.9" fill="#5e7028"/><ellipse cx="182.8" cy="112.9" rx="8.5" ry="6.0" fill="#b8a442"/><ellipse cx="186.5" cy="145.8" rx="5.1" ry="4.2" fill="#9a7a2c"/><ellipse cx="199.9" cy="11.2" rx="7.5" ry="6.1" fill="#5e7028"/><ellipse cx="159.8" cy="138.3" rx="4.4" ry="2.9" fill="#6e8230"/><ellipse cx="171.3" cy="30.2" rx="8.7" ry="6.3" fill="#8a9a38"/><ellipse cx="145.7" cy="146.8" rx="5.6" ry="3.7" fill="#d0a040"/><ellipse cx="136.4" cy="17.5" rx="5.1" ry="4.0" fill="#b8a442"/><ellipse cx="122.5" cy="67.2" rx="9.0" ry="7.0" fill="#a2a640"/><ellipse cx="155.7" cy="135.7" rx="7.6" ry="4.5" fill="#6e8230"/><ellipse cx="126.1" cy="83.1" rx="7.0" ry="5.6" fill="#5e7028"/><ellipse cx="183.1" cy="43.0" rx="6.3" ry="5.2" fill="#8a9a38"/><ellipse cx="119.9" cy="30.3" rx="7.3" ry="7.1" fill="#b8a442"/><ellipse cx="136.7" cy="45.1" rx="5.6" ry="5.3" fill="#9a7a2c"/><ellipse cx="132.1" cy="71.9" rx="7.8" ry="7.5" fill="#5e7028"/><ellipse cx="176.0" cy="63.9" rx="3.3" ry="3.2" fill="#b8a442"/><ellipse cx="151.6" cy="103.3" rx="4.5" ry="3.4" fill="#c08a30"/><ellipse cx="164.2" cy="157.2" rx="4.1" ry="2.6" fill="#5e7028"/><ellipse cx="132.3" cy="146.2" rx="3.5" ry="2.6" fill="#9a7a2c"/><ellipse cx="159.7" cy="84.4" rx="8.4" ry="5.4" fill="#8a9a38"/><ellipse cx="162.9" cy="159.0" rx="7.2" ry="5.5" fill="#d0a040"/><ellipse cx="155.3" cy="151.4" rx="5.6" ry="3.7" fill="#9a7a2c"/><ellipse cx="179.0" cy="1.6" rx="4.4" ry="3.3" fill="#c08a30"/><ellipse cx="118.4" cy="115.6" rx="6.3" ry="5.7" fill="#d0a040"/><ellipse cx="125.0" cy="37.5" rx="3.5" ry="2.2" fill="#8a9a38"/><ellipse cx="122.5" cy="128.1" rx="6.4" ry="5.9" fill="#8a9a38"/><ellipse cx="132.0" cy="57.1" rx="8.2" ry="7.7" fill="#d0a040"/><ellipse cx="126.9" cy="69.2" rx="3.3" ry="2.4" fill="#6e8230"/><ellipse cx="131.2" cy="167.0" rx="4.1" ry="3.3" fill="#b8a442"/><ellipse cx="122.4" cy="65.2" rx="7.0" ry="5.7" fill="#b8a442"/><ellipse cx="158.4" cy="71.4" rx="3.3" ry="2.3" fill="#b8a442"/></g>
<path d="M104,92 Q118,86 134,94 L132,136 L104,136 Z" fill="#6e8030"/>
<ellipse cx="114.6" cy="109.2" rx="3.6" ry="2.5" fill="#5e7028"/><ellipse cx="105.5" cy="113.6" rx="3.1" ry="2.7" fill="#5e7028"/><ellipse cx="123.9" cy="96.2" rx="4.8" ry="3.3" fill="#5e7028"/><ellipse cx="129.7" cy="114.5" rx="2.2" ry="1.3" fill="#5e7028"/><ellipse cx="105.9" cy="131.9" rx="4.5" ry="3.2" fill="#7a8a34"/><ellipse cx="126.3" cy="102.8" rx="4.1" ry="3.5" fill="#9aa442"/><ellipse cx="115.4" cy="122.0" rx="2.6" ry="1.6" fill="#7a8a34"/><ellipse cx="116.1" cy="118.1" rx="2.1" ry="2.0" fill="#7a8a34"/><ellipse cx="117.9" cy="90.6" rx="4.2" ry="3.8" fill="#9aa442"/><ellipse cx="118.0" cy="119.6" rx="4.0" ry="3.7" fill="#5e7028"/><ellipse cx="119.0" cy="97.0" rx="4.3" ry="3.0" fill="#9aa442"/><ellipse cx="106.8" cy="94.2" rx="4.4" ry="3.3" fill="#7a8a34"/><ellipse cx="122.4" cy="101.3" rx="4.7" ry="3.6" fill="#9aa442"/><ellipse cx="128.3" cy="130.6" rx="2.4" ry="2.2" fill="#7a8a34"/><ellipse cx="112.2" cy="100.2" rx="3.7" ry="3.3" fill="#5e7028"/><ellipse cx="124.1" cy="103.6" rx="2.8" ry="2.6" fill="#9aa442"/><ellipse cx="108.3" cy="125.2" rx="4.9" ry="4.9" fill="#5e7028"/><ellipse cx="113.2" cy="96.9" rx="2.9" ry="2.4" fill="#9aa442"/><ellipse cx="106.6" cy="110.4" rx="4.2" ry="3.1" fill="#5e7028"/><ellipse cx="115.2" cy="91.7" rx="3.1" ry="3.0" fill="#9aa442"/><ellipse cx="131.9" cy="131.3" rx="3.6" ry="2.8" fill="#5e7028"/><ellipse cx="104.5" cy="124.4" rx="4.7" ry="3.2" fill="#7a8a34"/><ellipse cx="111.8" cy="103.3" rx="3.8" ry="2.6" fill="#7a8a34"/><ellipse cx="117.2" cy="123.8" rx="4.3" ry="3.6" fill="#7a8a34"/><ellipse cx="112.4" cy="115.5" rx="2.3" ry="1.7" fill="#7a8a34"/>
<polygon points="0,168 114,136 126,136 10,200 0,200" fill="#6f9040"/>
<polygon points="0,158 60,143 112,133 114,137 60,150 0,171" fill="#c2ccaa"/>
<polygon points="134,136 200,160 200,176 130,140" fill="#6a4a30"/>
<polygon points="8,200 118,136 134,136 200,164 200,200" fill="url(#road1)"/>
<polygon points="10,200 13,200 120,137 118,137" fill="#e6e6de"/>
<polygon points="129,138 131,138 147,200 142,200" fill="#e3b02c"/>
<polygon points="132,138 134,138 157,200 152,200" fill="#e3b02c"/>
</svg><svg style="position:absolute;left:908px;top:740px" width="200" height="200" viewBox="0 0 200 200">
<defs>
<linearGradient id="sky2" x1="0" y1="0" x2="0" y2="1"><stop offset="0" stop-color="#7ea6dc"/><stop offset="1" stop-color="#c4d8ec"/></linearGradient>
<linearGradient id="gr2" x1="0" y1="0" x2="0" y2="1"><stop offset="0" stop-color="#4a3428"/><stop offset="0.6" stop-color="#5e3e2c"/><stop offset="1" stop-color="#a8583a"/></linearGradient>
</defs>
<rect width="200" height="200" fill="url(#sky2)"/>
<path d="M0,12 Q40,8 80,18 Q100,24 98,34 Q80,46 40,45 Q10,44 0,40 Z" fill="#9aa0b2"/>
<path d="M20,28 Q60,26 100,32 Q90,42 50,40 Z" fill="#d8dce4"/>
<path d="M0,72 Q40,68 80,71 Q50,78 0,82 Z" fill="#8e96aa"/>
<path d="M0,83 Q50,80 100,84 L160,83 L200,82 L200,100 L0,100 Z" fill="#d8dce6" opacity="0.6"/>
<polygon points="0,86 20,84 40,87 70,84 95,87 130,85 170,86 200,84 200,100 0,100" fill="#7c7890"/>
<rect x="0" y="93" width="200" height="107" fill="url(#gr2)"/>
<path d="M103,26 Q125,21 159,25 L160,35 Q171,55 183,65 Q193,80 200,100 L200,200 L150,200 Q150,140 152.8,86 Q150,71 140,60 Q132,52 128,52 Q120,54 119,57 Q114,64 112,72 Q102,86 110.7,105 L110.7,200 L82,200 L83,91 Q88,81 87,66 Q88,52 96,40 Z" fill="#b45e3c"/>
<path d="M119,44 Q135,40 150,50 Q158,62 160,80 L152,86 Q150,71 140,60 Q132,52 128,52 Q120,54 119,57 Z" fill="#7a3e2a"/>
<path d="M103,26 Q125,21 159,25 L160,35 Q130,30 103,32 Z" fill="#8e4a32"/>
<polygon points="0,120 40,118 200,122 200,200 0,200" fill="#9c5236" opacity="0.5"/>
<clipPath id="archc"><path d="M103,26 Q125,21 159,25 L160,35 Q171,55 183,65 Q193,80 200,100 L200,200 L150,200 Q150,140 152.8,86 Q150,71 140,60 Q132,52 128,52 Q120,54 119,57 Q114,64 112,72 Q102,86 110.7,105 L110.7,200 L82,200 L83,91 Q88,81 87,66 Q88,52 96,40 Z"/></clipPath><g clip-path="url(#archc)" opacity="0.7"><ellipse cx="193.3" cy="92.2" rx="1.6" ry="1.2" fill="#8e4630"/><ellipse cx="137.7" cy="56.3" rx="2.4" ry="2.2" fill="#c46a44"/><ellipse cx="115.8" cy="27.6" rx="2.9" ry="2.6" fill="#c46a44"/><ellipse cx="93.6" cy="37.8" rx="2.5" ry="1.5" fill="#c46a44"/><ellipse cx="141.6" cy="30.7" rx="3.1" ry="2.4" fill="#a8543a"/><ellipse cx="180.5" cy="28.4" rx="3.3" ry="2.5" fill="#a8543a"/><ellipse cx="159.5" cy="29.9" rx="1.5" ry="1.1" fill="#d07a50"/><ellipse cx="111.4" cy="31.7" rx="2.1" ry="1.7" fill="#a8543a"/><ellipse cx="144.3" cy="32.9" rx="2.7" ry="2.2" fill="#a8543a"/><ellipse cx="85.0" cy="48.2" rx="3.9" ry="2.9" fill="#8e4630"/><ellipse cx="104.4" cy="34.0" rx="2.1" ry="1.7" fill="#b86040"/><ellipse cx="186.9" cy="21.7" rx="3.9" ry="3.5" fill="#d07a50"/><ellipse cx="164.2" cy="43.2" rx="3.4" ry="3.0" fill="#c46a44"/><ellipse cx="98.4" cy="49.1" rx="1.6" ry="1.3" fill="#d07a50"/><ellipse cx="93.2" cy="82.7" rx="1.8" ry="1.2" fill="#b86040"/><ellipse cx="109.2" cy="105.2" rx="2.8" ry="2.6" fill="#c46a44"/><ellipse cx="88.8" cy="57.1" rx="1.7" ry="1.5" fill="#a8543a"/><ellipse cx="163.0" cy="109.6" rx="2.4" ry="2.0" fill="#d07a50"/><ellipse cx="101.9" cy="54.9" rx="3.8" ry="2.3" fill="#d07a50"/><ellipse cx="174.6" cy="36.3" rx="2.8" ry="1.8" fill="#a8543a"/><ellipse cx="121.3" cy="35.4" rx="2.0" ry="1.7" fill="#a8543a"/><ellipse cx="165.0" cy="27.4" rx="1.5" ry="0.9" fill="#d07a50"/><ellipse cx="143.1" cy="56.3" rx="1.7" ry="1.4" fill="#b86040"/><ellipse cx="103.9" cy="88.8" rx="3.6" ry="2.3" fill="#d07a50"/><ellipse cx="166.1" cy="58.4" rx="1.9" ry="1.7" fill="#d07a50"/><ellipse cx="169.5" cy="34.8" rx="3.6" ry="3.4" fill="#8e4630"/><ellipse cx="169.4" cy="111.6" rx="3.5" ry="2.3" fill="#b86040"/><ellipse cx="126.3" cy="90.4" rx="3.8" ry="2.8" fill="#b86040"/><ellipse cx="195.3" cy="78.5" rx="3.9" ry="2.4" fill="#c46a44"/><ellipse cx="174.0" cy="108.3" rx="3.4" ry="2.4" fill="#a8543a"/><ellipse cx="150.5" cy="81.8" rx="3.7" ry="3.6" fill="#b86040"/><ellipse cx="162.2" cy="98.1" rx="2.5" ry="2.3" fill="#d07a50"/><ellipse cx="161.9" cy="123.6" rx="3.6" ry="3.5" fill="#d07a50"/><ellipse cx="107.4" cy="93.9" rx="3.5" ry="3.3" fill="#b86040"/><ellipse cx="131.2" cy="53.5" rx="2.3" ry="1.4" fill="#b86040"/><ellipse cx="93.3" cy="109.4" rx="2.5" ry="1.8" fill="#b86040"/><ellipse cx="97.5" cy="80.0" rx="1.7" ry="1.6" fill="#d07a50"/><ellipse cx="154.3" cy="52.1" rx="1.7" ry="1.2" fill="#8e4630"/><ellipse cx="186.7" cy="64.8" rx="2.8" ry="1.8" fill="#a8543a"/><ellipse cx="162.0" cy="24.6" rx="3.6" ry="2.7" fill="#a8543a"/><ellipse cx="119.9" cy="36.6" rx="1.9" ry="1.8" fill="#8e4630"/><ellipse cx="153.2" cy="118.3" rx="2.5" ry="1.8" fill="#d07a50"/><ellipse cx="185.1" cy="107.0" rx="3.0" ry="2.3" fill="#a8543a"/><ellipse cx="81.1" cy="113.9" rx="1.8" ry="1.4" fill="#a8543a"/><ellipse cx="177.1" cy="47.6" rx="2.4" ry="2.4" fill="#c46a44"/><ellipse cx="168.1" cy="102.8" rx="3.2" ry="3.1" fill="#a8543a"/><ellipse cx="187.3" cy="93.3" rx="1.7" ry="1.2" fill="#b86040"/><ellipse cx="112.0" cy="52.5" rx="2.3" ry="2.2" fill="#d07a50"/><ellipse cx="177.0" cy="26.6" rx="3.1" ry="2.3" fill="#d07a50"/><ellipse cx="197.1" cy="26.3" rx="3.6" ry="3.0" fill="#c46a44"/><ellipse cx="133.7" cy="102.6" rx="3.7" ry="3.4" fill="#b86040"/><ellipse cx="84.2" cy="55.8" rx="1.8" ry="1.2" fill="#8e4630"/><ellipse cx="150.5" cy="83.4" rx="1.6" ry="1.1" fill="#d07a50"/><ellipse cx="150.7" cy="128.0" rx="3.1" ry="2.2" fill="#a8543a"/><ellipse cx="145.3" cy="66.3" rx="3.9" ry="3.6" fill="#c46a44"/><ellipse cx="161.2" cy="61.9" rx="3.9" ry="3.4" fill="#8e4630"/><ellipse cx="113.3" cy="37.8" rx="2.9" ry="2.7" fill="#c46a44"/><ellipse cx="121.7" cy="35.4" rx="2.8" ry="1.9" fill="#c46a44"/><ellipse cx="168.6" cy="38.8" rx="2.3" ry="1.9" fill="#c46a44"/><ellipse cx="196.6" cy="105.5" rx="2.4" ry="1.7" fill="#a8543a"/><ellipse cx="186.9" cy="72.2" rx="3.1" ry="2.3" fill="#d07a50"/><ellipse cx="161.8" cy="59.8" rx="2.3" ry="1.6" fill="#d07a50"/><ellipse cx="104.5" cy="120.0" rx="2.6" ry="2.2" fill="#d07a50"/><ellipse cx="173.4" cy="54.6" rx="1.9" ry="1.5" fill="#b86040"/><ellipse cx="147.0" cy="93.8" rx="3.4" ry="2.6" fill="#8e4630"/><ellipse cx="166.1" cy="63.5" rx="3.5" ry="2.5" fill="#c46a44"/><ellipse cx="172.6" cy="24.5" rx="3.6" ry="2.6" fill="#b86040"/><ellipse cx="152.3" cy="59.6" rx="4.0" ry="3.8" fill="#c46a44"/><ellipse cx="91.6" cy="86.3" rx="3.6" ry="3.5" fill="#c46a44"/><ellipse cx="99.9" cy="39.4" rx="3.3" ry="3.0" fill="#c46a44"/><ellipse cx="127.3" cy="123.4" rx="3.4" ry="2.6" fill="#8e4630"/><ellipse cx="140.0" cy="57.1" rx="3.7" ry="3.0" fill="#a8543a"/><ellipse cx="142.5" cy="93.6" rx="3.8" ry="2.6" fill="#a8543a"/><ellipse cx="161.8" cy="121.7" rx="1.7" ry="1.6" fill="#c46a44"/><ellipse cx="160.1" cy="83.6" rx="2.5" ry="2.2" fill="#b86040"/><ellipse cx="174.2" cy="94.7" rx="3.6" ry="2.4" fill="#a8543a"/><ellipse cx="160.6" cy="103.0" rx="2.8" ry="2.6" fill="#8e4630"/><ellipse cx="169.2" cy="110.3" rx="3.1" ry="2.0" fill="#8e4630"/><ellipse cx="164.5" cy="97.4" rx="3.0" ry="2.7" fill="#8e4630"/><ellipse cx="172.6" cy="86.5" rx="2.8" ry="1.9" fill="#b86040"/><ellipse cx="106.9" cy="30.3" rx="3.2" ry="2.4" fill="#c46a44"/><ellipse cx="163.9" cy="27.9" rx="3.6" ry="2.5" fill="#8e4630"/><ellipse cx="134.9" cy="104.0" rx="2.6" ry="1.6" fill="#b86040"/><ellipse cx="133.5" cy="81.0" rx="3.5" ry="2.9" fill="#c46a44"/><ellipse cx="136.1" cy="73.2" rx="2.2" ry="2.2" fill="#8e4630"/><ellipse cx="143.7" cy="45.3" rx="2.9" ry="2.1" fill="#a8543a"/><ellipse cx="196.9" cy="83.5" rx="3.3" ry="3.0" fill="#a8543a"/><ellipse cx="83.4" cy="75.5" rx="2.6" ry="2.5" fill="#c46a44"/><ellipse cx="112.8" cy="29.8" rx="1.8" ry="1.4" fill="#d07a50"/><ellipse cx="150.7" cy="44.9" rx="3.7" ry="3.4" fill="#c46a44"/><ellipse cx="195.4" cy="56.2" rx="4.0" ry="3.4" fill="#c46a44"/><ellipse cx="149.1" cy="67.4" rx="3.9" ry="3.1" fill="#b86040"/><ellipse cx="121.0" cy="40.9" rx="2.5" ry="2.3" fill="#8e4630"/><ellipse cx="89.2" cy="118.7" rx="1.5" ry="1.4" fill="#a8543a"/><ellipse cx="169.2" cy="105.1" rx="2.0" ry="1.8" fill="#8e4630"/><ellipse cx="193.8" cy="121.2" rx="3.3" ry="2.1" fill="#c46a44"/><ellipse cx="104.7" cy="21.4" rx="3.7" ry="2.6" fill="#b86040"/><ellipse cx="122.6" cy="38.0" rx="3.1" ry="2.2" fill="#8e4630"/><ellipse cx="85.3" cy="39.3" rx="2.4" ry="2.2" fill="#c46a44"/><ellipse cx="134.6" cy="31.2" rx="1.8" ry="1.3" fill="#a8543a"/><ellipse cx="186.1" cy="73.5" rx="1.7" ry="1.6" fill="#8e4630"/><ellipse cx="137.1" cy="110.4" rx="1.8" ry="1.5" fill="#c46a44"/><ellipse cx="110.1" cy="62.8" rx="2.4" ry="2.3" fill="#c46a44"/><ellipse cx="103.2" cy="50.6" rx="3.5" ry="2.7" fill="#b86040"/><ellipse cx="167.9" cy="62.3" rx="3.5" ry="2.3" fill="#d07a50"/><ellipse cx="81.5" cy="43.5" rx="3.0" ry="1.8" fill="#d07a50"/><ellipse cx="177.6" cy="127.0" rx="1.7" ry="1.2" fill="#c46a44"/><ellipse cx="148.7" cy="120.5" rx="3.6" ry="3.1" fill="#8e4630"/><ellipse cx="186.2" cy="73.3" rx="3.1" ry="1.9" fill="#a8543a"/><ellipse cx="104.5" cy="59.0" rx="3.7" ry="3.1" fill="#c46a44"/><ellipse cx="95.1" cy="42.0" rx="2.6" ry="2.6" fill="#b86040"/><ellipse cx="162.2" cy="120.5" rx="3.4" ry="3.0" fill="#b86040"/><ellipse cx="86.5" cy="71.8" rx="2.5" ry="2.2" fill="#a8543a"/><ellipse cx="136.3" cy="116.9" rx="3.0" ry="2.9" fill="#c46a44"/><ellipse cx="151.9" cy="26.9" rx="2.1" ry="1.3" fill="#a8543a"/><ellipse cx="147.9" cy="102.0" rx="2.1" ry="1.4" fill="#c46a44"/><ellipse cx="189.0" cy="42.0" rx="1.5" ry="0.9" fill="#d07a50"/><ellipse cx="108.9" cy="122.4" rx="2.0" ry="2.0" fill="#c46a44"/><ellipse cx="156.6" cy="121.1" rx="2.2" ry="1.7" fill="#a8543a"/><ellipse cx="137.5" cy="125.2" rx="3.4" ry="2.3" fill="#c46a44"/></g><g opacity="0.6"><ellipse cx="64.6" cy="101.5" rx="2.8" ry="2.2" fill="#6a4632"/><ellipse cx="76.5" cy="109.0" rx="3.7" ry="3.5" fill="#6a4632"/><ellipse cx="44.5" cy="123.9" rx="2.8" ry="2.3" fill="#7a5038"/><ellipse cx="63.3" cy="114.3" rx="3.3" ry="2.7" fill="#7a5038"/><ellipse cx="23.3" cy="109.5" rx="1.5" ry="1.0" fill="#7a5038"/><ellipse cx="15.0" cy="113.2" rx="3.6" ry="2.3" fill="#6a4632"/><ellipse cx="52.0" cy="103.0" rx="2.6" ry="2.2" fill="#6a4632"/><ellipse cx="6.9" cy="113.7" rx="3.2" ry="2.8" fill="#6a4632"/><ellipse cx="68.0" cy="124.8" rx="1.8" ry="1.2" fill="#4a3428"/><ellipse cx="24.7" cy="106.1" rx="2.7" ry="2.7" fill="#7a5038"/><ellipse cx="61.5" cy="96.2" rx="1.7" ry="1.5" fill="#6a4632"/><ellipse cx="61.4" cy="103.3" rx="2.5" ry="2.4" fill="#4a3428"/><ellipse cx="46.0" cy="103.2" rx="3.4" ry="3.3" fill="#6a4632"/><ellipse cx="67.0" cy="120.4" rx="1.6" ry="1.0" fill="#7a5038"/><ellipse cx="72.9" cy="123.2" rx="1.6" ry="1.6" fill="#7a5038"/><ellipse cx="35.3" cy="120.0" rx="2.1" ry="2.0" fill="#4a3428"/><ellipse cx="2.3" cy="109.0" rx="1.9" ry="1.9" fill="#6a4632"/><ellipse cx="52.3" cy="127.7" rx="3.4" ry="2.4" fill="#4a3428"/><ellipse cx="20.0" cy="110.0" rx="1.6" ry="1.3" fill="#6a4632"/><ellipse cx="28.5" cy="123.7" rx="1.5" ry="1.4" fill="#6a4632"/><ellipse cx="63.6" cy="114.1" rx="1.8" ry="1.4" fill="#4a3428"/><ellipse cx="27.0" cy="98.2" rx="1.8" ry="1.2" fill="#4a3428"/><ellipse cx="42.5" cy="118.1" rx="2.8" ry="2.8" fill="#4a3428"/><ellipse cx="41.5" cy="122.4" rx="3.1" ry="2.1" fill="#7a5038"/><ellipse cx="23.0" cy="126.8" rx="1.5" ry="1.2" fill="#4a3428"/><ellipse cx="9.5" cy="128.2" rx="3.0" ry="2.6" fill="#7a5038"/><ellipse cx="55.3" cy="121.4" rx="3.4" ry="2.5" fill="#6a4632"/><ellipse cx="76.8" cy="99.1" rx="3.7" ry="2.6" fill="#7a5038"/><ellipse cx="77.1" cy="117.9" rx="3.0" ry="1.9" fill="#7a5038"/><ellipse cx="5.4" cy="109.3" rx="1.7" ry="1.1" fill="#7a5038"/><ellipse cx="1.2" cy="108.3" rx="1.9" ry="1.6" fill="#6a4632"/><ellipse cx="51.9" cy="113.3" rx="3.7" ry="2.5" fill="#4a3428"/><ellipse cx="8.0" cy="106.3" rx="2.5" ry="1.7" fill="#7a5038"/><ellipse cx="79.1" cy="125.9" rx="3.7" ry="2.7" fill="#4a3428"/><ellipse cx="66.6" cy="97.0" rx="3.6" ry="2.3" fill="#6a4632"/><ellipse cx="16.7" cy="107.9" rx="2.3" ry="1.4" fill="#7a5038"/><ellipse cx="15.2" cy="126.8" rx="1.9" ry="1.6" fill="#7a5038"/><ellipse cx="25.0" cy="104.9" rx="1.6" ry="1.0" fill="#4a3428"/><ellipse cx="78.6" cy="109.0" rx="3.1" ry="2.6" fill="#7a5038"/><ellipse cx="5.0" cy="106.1" rx="2.2" ry="2.1" fill="#6a4632"/></g><g opacity="0.5"><ellipse cx="33.8" cy="29.0" rx="2.7" ry="2.5" fill="#b8bec8"/><ellipse cx="23.9" cy="22.8" rx="4.1" ry="3.9" fill="#e4e8ee"/><ellipse cx="86.4" cy="15.8" rx="5.0" ry="3.5" fill="#e4e8ee"/><ellipse cx="18.4" cy="17.7" rx="3.5" ry="2.5" fill="#b8bec8"/><ellipse cx="84.8" cy="19.2" rx="2.0" ry="1.8" fill="#e4e8ee"/><ellipse cx="79.5" cy="18.2" rx="2.1" ry="1.7" fill="#b8bec8"/><ellipse cx="10.4" cy="29.4" rx="4.0" ry="2.6" fill="#b8bec8"/><ellipse cx="45.6" cy="16.1" rx="2.9" ry="1.8" fill="#b8bec8"/><ellipse cx="18.1" cy="19.3" rx="3.8" ry="3.7" fill="#e4e8ee"/><ellipse cx="52.7" cy="12.5" rx="2.9" ry="2.0" fill="#8a90a0"/><ellipse cx="58.1" cy="45.0" rx="5.7" ry="3.7" fill="#b8bec8"/><ellipse cx="89.7" cy="28.4" rx="3.0" ry="2.4" fill="#e4e8ee"/><ellipse cx="30.0" cy="13.6" rx="3.9" ry="3.8" fill="#b8bec8"/><ellipse cx="43.8" cy="35.6" rx="2.3" ry="2.0" fill="#b8bec8"/><ellipse cx="9.3" cy="19.8" rx="5.2" ry="3.3" fill="#e4e8ee"/><ellipse cx="93.5" cy="26.9" rx="2.7" ry="2.3" fill="#e4e8ee"/><ellipse cx="77.1" cy="41.6" rx="4.6" ry="4.1" fill="#8a90a0"/><ellipse cx="51.0" cy="18.2" rx="4.0" ry="2.6" fill="#8a90a0"/><ellipse cx="34.6" cy="23.6" rx="5.5" ry="5.0" fill="#b8bec8"/><ellipse cx="81.4" cy="22.9" rx="5.6" ry="4.9" fill="#e4e8ee"/><ellipse cx="1.5" cy="26.0" rx="4.9" ry="3.4" fill="#b8bec8"/><ellipse cx="3.4" cy="25.4" rx="2.6" ry="1.8" fill="#e4e8ee"/><ellipse cx="29.8" cy="17.0" rx="2.3" ry="2.0" fill="#e4e8ee"/><ellipse cx="1.2" cy="43.2" rx="2.9" ry="2.2" fill="#b8bec8"/><ellipse cx="81.1" cy="36.0" rx="4.7" ry="4.0" fill="#e4e8ee"/><ellipse cx="20.6" cy="39.2" rx="2.8" ry="2.0" fill="#b8bec8"/><ellipse cx="92.6" cy="36.5" rx="2.1" ry="1.6" fill="#e4e8ee"/><ellipse cx="63.5" cy="10.8" rx="3.5" ry="2.4" fill="#e4e8ee"/><ellipse cx="79.5" cy="15.4" rx="5.2" ry="4.1" fill="#8a90a0"/><ellipse cx="53.4" cy="34.9" rx="2.6" ry="2.1" fill="#e4e8ee"/></g>
</svg></div></div>
<div style="position:absolute;left:716px;top:940px;width:2138px;height:4px;background:#0a0a0a;"></div>
<svg style="position:absolute;left:0;top:0" width="2854" height="1988" viewBox="0 0 2854 1988" fill="none" stroke-linecap="round" stroke-linejoin="round">
<!-- logo -->
<g stroke="#bdbdbd" stroke-width="4">
<path d="M24.5,42 L42,62.3 Q44,64.5 46.2,62 L55.3,43.5 Q57.3,39 52.5,35.5"/>
<path d="M29.5,56.5 L34.5,47.5" stroke="#272727" stroke-width="9" stroke-linecap="butt"/>
<path d="M26.9,60.5 L37.5,42.5 Q40.5,38 38.5,34.5 Q35.5,31.5 31,31.8 Q25.5,32.3 23.5,37 Q22.5,40 24.5,42"/>
</g>
<path d="M45,30.8 L54.5,30.8 L49.4,39 Z" fill="#bdbdbd"/>
<circle cx="26.9" cy="60.5" r="4.2" fill="#bdbdbd"/>
<!-- grid -->
<g stroke="#bdbdbd" stroke-width="2.8" stroke-linecap="butt">
<rect x="25.5" y="106.5" width="11" height="11"/><rect x="43" y="106.5" width="11" height="11"/>
<rect x="25.5" y="123.5" width="11" height="11"/><rect x="43" y="123.5" width="11" height="11"/>
</g>
<!-- search -->
<g stroke="#bdbdbd" stroke-width="3">
<circle cx="36.4" cy="188" r="12"/><line x1="44.5" y1="197" x2="54" y2="207"/>
</g>
<!-- users -->
<g stroke="#bdbdbd" stroke-width="2.8">
<circle cx="29.5" cy="257.5" r="6.5"/><circle cx="49" cy="257.5" r="6.5"/>
<path d="M18.5,276 Q20,265 29.5,265 Q39,265 40,276 Z"/>
<path d="M40,276 Q41,265 50,265 Q59.5,265 60.5,276 Z"/>
</g>
<!-- branch -->
<g stroke="#bdbdbd" stroke-width="3">
<line x1="30.3" y1="321" x2="30.3" y2="350"/><path d="M30.3,338 L46,338 Q48,338 48,336 L48,327"/>
</g>
<circle cx="30.3" cy="321.3" r="4.8" fill="#bdbdbd"/><circle cx="48.2" cy="327.4" r="4.8" fill="#bdbdbd"/><circle cx="30.3" cy="349.7" r="4.8" fill="#bdbdbd"/>
<!-- cloud db -->
<g stroke="#bdbdbd" stroke-width="2.8">
<path d="M29,400 Q30,390 42,390 Q53,390 55,401"/>
<path d="M28,400 L28,406 M28,397 Q18,397 18,407 Q18,416 27,416 L36,416"/>
<ellipse cx="48.6" cy="407.5" rx="11.5" ry="4.6"/>
<path d="M37.1,407.5 L37.1,421 Q37.1,426 48.6,426 Q60.1,426 60.1,421 L60.1,407.5"/>
<path d="M37.1,414 Q37.1,418.5 48.6,418.5 Q60.1,418.5 60.1,414"/>
</g>
<!-- cloud f -->
<g stroke="#bdbdbd" stroke-width="2.8">
<path d="M30,476 L30,470 Q27,468 26,469 Q17,471 17,480 Q17,490 30,490"/>
<path d="M30,470 Q34,461 45,461 Q58,462 59,474 Q59,479 58,482"/>
<path d="M42.5,494 L42.5,481 Q42.5,475.5 48,475.5 L50,475.5"/>
<line x1="37.5" y1="483.3" x2="50.5" y2="483.3"/>
</g>
<!-- gear -->
<g stroke="#bdbdbd" stroke-width="2.8">
<path d="M52.40,551.60 L52.48,552.31 L52.71,553.05 L53.05,553.84 L53.46,554.69 L53.87,555.61 L54.23,556.58 L54.47,557.58 L54.54,558.56 L54.41,559.50 L54.06,560.35 L53.49,561.08 L52.75,561.66 L51.86,562.09 L50.88,562.39 L49.86,562.56 L48.86,562.66 L47.91,562.73 L47.06,562.83 L46.31,563.00 L45.65,563.29 L45.07,563.72 L44.55,564.28 L44.03,564.97 L43.50,565.75 L42.91,566.57 L42.25,567.37 L41.51,568.07 L40.69,568.62 L39.81,568.98 L38.90,569.10 L37.99,568.98 L37.11,568.62 L36.29,568.07 L35.55,567.37 L34.89,566.57 L34.30,565.75 L33.77,564.97 L33.25,564.28 L32.73,563.72 L32.15,563.29 L31.49,563.00 L30.74,562.83 L29.89,562.73 L28.94,562.66 L27.94,562.56 L26.92,562.39 L25.94,562.09 L25.05,561.66 L24.31,561.08 L23.74,560.35 L23.39,559.50 L23.26,558.56 L23.33,557.58 L23.57,556.58 L23.93,555.61 L24.34,554.69 L24.75,553.84 L25.09,553.05 L25.32,552.31 L25.40,551.60 L25.32,550.89 L25.09,550.15 L24.75,549.36 L24.34,548.51 L23.93,547.59 L23.57,546.62 L23.33,545.62 L23.26,544.64 L23.39,543.70 L23.74,542.85 L24.31,542.12 L25.05,541.54 L25.94,541.11 L26.92,540.81 L27.94,540.64 L28.94,540.54 L29.89,540.47 L30.74,540.37 L31.49,540.20 L32.15,539.91 L32.73,539.48 L33.25,538.92 L33.77,538.23 L34.30,537.45 L34.89,536.63 L35.55,535.83 L36.29,535.13 L37.11,534.58 L37.99,534.22 L38.90,534.10 L39.81,534.22 L40.69,534.58 L41.51,535.13 L42.25,535.83 L42.91,536.63 L43.50,537.45 L44.03,538.23 L44.55,538.92 L45.07,539.48 L45.65,539.91 L46.31,540.20 L47.06,540.37 L47.91,540.47 L48.86,540.54 L49.86,540.64 L50.88,540.81 L51.86,541.11 L52.75,541.54 L53.49,542.12 L54.06,542.85 L54.41,543.70 L54.54,544.64 L54.47,545.62 L54.23,546.62 L53.87,547.59 L53.46,548.51 L53.05,549.36 L52.71,550.15 L52.48,550.89 L52.40,551.60 Z"/>
<circle cx="38.9" cy="551.6" r="7"/>
</g>
<!-- panel header icons -->
<g stroke="#bdbdbd" stroke-width="2.2">
<path d="M612,28.5 L598,28.5 Q594.5,28.5 594.5,32 L594.5,45 Q594.5,48.5 598,48.5 L611,48.5 Q614.5,48.5 614.5,45 L614.5,41"/>
<path d="M667,33.5 L687,33.5 M672.5,33 L672.5,30 Q672.5,28.5 674,28.5 L680,28.5 Q681.5,28.5 681.5,30 L681.5,33 M669.5,34 L670,49 Q670,50.5 672,50.5 L683,50.5 Q685,50.5 685,49 L685.5,34"/>
</g>
<path d="M604,44.5 L606,38 L617,27 Q618.5,25.5 620,27 L621.5,28.5 Q623,30 621.5,31.5 L610.5,42.5 Z" fill="#bdbdbd"/>
<line x1="613.8" y1="30.2" x2="618.8" y2="35.2" stroke="#272727" stroke-width="1.3"/>
<g stroke="#bdbdbd" stroke-width="2" stroke-linecap="butt"><line x1="672.5" y1="37" x2="672.5" y2="46"/><line x1="677" y1="37" x2="677" y2="46"/><line x1="681.5" y1="37" x2="681.5" y2="46"/></g>
<!-- alignment icons -->
<g stroke="#7f7f7f" stroke-width="3" stroke-linecap="butt">
<line x1="196" y1="280.5" x2="230" y2="280.5"/><line x1="213" y1="244" x2="213" y2="266"/>
<line x1="278" y1="262.5" x2="312" y2="262.5"/><line x1="295" y1="240" x2="295" y2="252"/><line x1="295" y1="273" x2="295" y2="286"/>
<line x1="360" y1="245.5" x2="394" y2="245.5"/><line x1="377" y1="260" x2="377" y2="282"/>
<line x1="441.5" y1="246" x2="441.5" y2="280"/><line x1="455" y1="263" x2="478" y2="263"/>
<line x1="541" y1="246" x2="541" y2="280"/><line x1="517" y1="263" x2="527" y2="263"/><line x1="555" y1="263" x2="564" y2="263"/>
<line x1="639.5" y1="246" x2="639.5" y2="280"/><line x1="604" y1="263" x2="625" y2="263"/>
</g>
<g fill="#7f7f7f">
<polygon points="205,265 221,265 213,273"/>
<polygon points="287,251 303,251 295,259"/>
<polygon points="287,274 303,274 295,266"/>
<polygon points="369,261 385,261 377,253"/>
<polygon points="456,255 456,271 448,263"/>
<polygon points="526,255 526,271 534,263"/>
<polygon points="556,255 556,271 548,263"/>
<polygon points="624,255 624,271 632,263"/>
</g>
<!-- reset -->
<g stroke="#bdbdbd" stroke-width="2.2"><path d="M96,461 A10.5,10.5 0 1 1 98,473"/></g>
<polygon points="92,466 101,466 96.5,458" fill="#bdbdbd" transform="rotate(-20 96 464)"/>
<!-- dropdown triangle -->
<polygon points="657,892.5 673,892.5 665,901" fill="#8a8a8a"/>
<!-- toolbar -->
<g stroke="#e8b94a" stroke-width="3"><line x1="753.5" y1="27.5" x2="753.5" y2="52.5"/><line x1="741" y1="40" x2="766" y2="40"/></g>
<g stroke="#555555" stroke-width="3"><polyline points="849.5,28 837.5,40 849.5,52"/><polyline points="901,28 913,40 901,52"/></g>
<g stroke="#bdbdbd" stroke-width="2.6">
<path d="M983,31 A13.5,13.5 0 1 0 984.5,46"/>
<polyline points="972,34 984.5,34 984.5,26"/>
<path d="M1038,40 L1051.5,26.5 L1065,40 L1065,52 Q1065,53.5 1063.5,53.5 L1056,53.5 L1056,45 L1047,45 L1047,53.5 L1039.5,53.5 Q1038,53.5 1038,52 Z"/>
<line x1="1105" y1="28" x2="1099" y2="51"/>
<polyline points="1978.5,33 1987.5,42 1996.5,33"/>
<ellipse cx="2061.3" cy="42" rx="10.5" ry="14.5"/>
<line x1="2044" y1="42" x2="2079" y2="42"/>
<line x1="2057" y1="27" x2="2055" y2="23.5"/><line x1="2065.5" y1="27" x2="2067.5" y2="23.5"/>
<line x1="2050" y1="34" x2="2045.5" y2="31.5"/><line x1="2072.5" y1="34" x2="2077" y2="31.5"/>
<line x1="2050" y1="50" x2="2045.5" y2="52.5"/><line x1="2072.5" y1="50" x2="2077" y2="52.5"/>
</g>
<circle cx="2057.5" cy="37" r="1.4" fill="#bdbdbd"/><circle cx="2065.5" cy="37" r="1.4" fill="#bdbdbd"/>
<g stroke="#bdbdbd" stroke-width="3">
<rect x="2387.5" y="22.5" width="35" height="35" rx="3"/>
</g>
<g stroke="#bdbdbd" stroke-width="2.4">
<line x1="2407.5" y1="37.5" x2="2415" y2="30"/><polyline points="2408,29.5 2415.5,29.5 2415.5,37"/>
<line x1="2402.5" y1="42" x2="2395" y2="49.5"/><polyline points="2394.5,42.5 2394.5,50 2402,50"/>
<polyline points="2443.5,34.5 2452.3,43 2461,34.5"/>
<polyline points="2579,34 2588,43 2597,34"/>
</g>
<g stroke="#bdbdbd" stroke-width="3">
<rect x="2654.5" y="25.8" width="32" height="28.5" rx="2.5"/><line x1="2670.4" y1="26" x2="2670.4" y2="54"/>
</g>
<g stroke="#ffffff" stroke-width="3">
<rect x="2718.5" y="25.8" width="32" height="28.5" rx="2.5"/><line x1="2719" y1="39.8" x2="2750" y2="39.8"/>
</g>
<g stroke="#bdbdbd" stroke-width="3">
<rect x="2780.8" y="30" width="30" height="24.5" rx="3"/>
<path d="M2786,24 L2814.5,24 Q2817,24 2817,26.5 L2817,48"/>
</g>
</svg>
<div style="position:absolute;left:2259px;top:1370px;width:300px;height:72px;background:#233b59;"></div>
<div style="position:absolute;left:2279.6px;top:1392.28px;font:400 24px/30px 'Liberation Sans', sans-serif;color:#dcdcdc;white-space:nowrap;">Page</div>
<div style="position:absolute;left:2277.7px;top:1452.5px;width:2px;height:46.5px;background:#555555;"></div>
<div style="position:absolute;left:2277.7px;top:1497px;width:11px;height:2px;background:#555555;"></div>
<div style="position:absolute;left:2299px;top:1462px;width:300px;height:72px;background:#233b59;"></div>
<div style="position:absolute;left:2319px;top:1483.21px;font:400 24.5px/31px 'Liberation Sans', sans-serif;color:#dcdcdc;white-space:nowrap;">Group</div>
<div style="position:absolute;left:2317.6px;top:1544px;width:2px;height:175px;background:#555555;"></div>
<div style="position:absolute;left:2317.6px;top:1589px;width:11px;height:2px;background:#555555;"></div>
<div style="position:absolute;left:2317.6px;top:1717px;width:11px;height:2px;background:#555555;"></div>
<div style="position:absolute;left:2339px;top:1554px;width:300px;height:72px;background:#233b59;"></div>
<div style="position:absolute;left:2359.7px;top:1575.38px;font:400 24px/30px 'Liberation Sans', sans-serif;color:#dcdcdc;white-space:nowrap;">Text</div>
<div style="position:absolute;left:2336.5px;top:1643.5px;width:304px;height:148px;background:#ffffff;"></div>
<div style="position:absolute;left:2340.5px;top:1647.5px;width:296px;height:70.5px;background:#38536f;"></div>
<div style="position:absolute;left:2340.5px;top:1718px;width:296px;height:69.5px;background:#4d6380;"></div>
<div style="position:absolute;left:2359.7px;top:1667.18px;font:400 24px/30px 'Liberation Sans', sans-serif;color:#dcdcdc;white-space:nowrap;">Table</div>
<div style="position:absolute;left:2359.7px;top:1738.13px;font:400 22.7px/28px 'Liberation Sans', sans-serif;color:#dcdcdc;white-space:nowrap;">Items</div>
<svg style="position:absolute;left:0;top:0" width="2854" height="1988" viewBox="0 0 2854 1988">
<path d="M2092,1748 Q2200,1753.5 2332,1753.6" stroke="#dfae47" stroke-width="3" fill="none"/>
<polygon points="2330.5,1745.8 2347,1753.6 2330.5,1761.6" fill="#dfae47"/>
</svg>
<div style="position:absolute;left:712px;top:867px;width:1380px;height:1092px;background:#3a3a3a;box-shadow:0 0 34px 4px rgba(0,0,0,0.5);"></div><div style="position:absolute;left:805px;top:915px;width:1287px;height:996px;background:#323232;"></div><div style="position:absolute;left:805px;top:915px;width:1287px;height:36px;background:#2f2f2f;border:4px solid #2a2a2a;box-sizing:border-box;"></div><div style="position:absolute;left:2064px;top:915px;width:1px;height:996px;background:#474747;"></div><div style="position:absolute;left:692px;top:1347px;width:20px;height:39px;background:#363636;clip-path:polygon(100% 0,0 50%,100% 100%);"></div><div style="position:absolute;right:2070px;top:919.91px;font:400 24px/30px 'Liberation Mono', monospace;color:#d6d6d6;white-space:nowrap;-webkit-text-stroke:0.3px;">1</div><div style="position:absolute;left:804.5px;top:918.91px;font:400 24px/30px 'Liberation Mono', monospace;color:#c5c5cc;white-space:nowrap;-webkit-text-stroke:0.35px;"><span style="color:#c5c5cc">[</span></div><div style="position:absolute;right:2070px;top:955.91px;font:400 24px/30px 'Liberation Mono', monospace;color:#888888;white-space:nowrap;-webkit-text-stroke:0.3px;">2</div><div style="position:absolute;left:804.5px;top:954.91px;font:400 24px/30px 'Liberation Mono', monospace;color:#c5c5cc;white-space:nowrap;-webkit-text-stroke:0.35px;">&nbsp;&nbsp;<span style="color:#c5c5cc">{</span></div><div style="position:absolute;right:2070px;top:991.91px;font:400 24px/30px 'Liberation Mono', monospace;color:#888888;white-space:nowrap;-webkit-text-stroke:0.3px;">3</div><div style="position:absolute;left:804.5px;top:990.91px;font:400 24px/30px 'Liberation Mono', monospace;color:#c5c5cc;white-space:nowrap;-webkit-text-stroke:0.35px;">&nbsp;&nbsp;&nbsp;&nbsp;<span style="color:#e6c27c">Field</span><span style="color:#c5c5cc">:</span>&nbsp;<span style="color:#e6c27c">&#x27;Image_src&#x27;</span><span style="color:#c5c5cc">,</span></div><div style="position:absolute;right:2070px;top:1027.91px;font:400 24px/30px 'Liberation Mono', monospace;color:#888888;white-space:nowrap;-webkit-text-stroke:0.3px;">4</div><div style="position:absolute;left:804.5px;top:1026.91px;font:400 24px/30px 'Liberation Mono', monospace;color:#c5c5cc;white-space:nowrap;-webkit-text-stroke:0.35px;">&nbsp;&nbsp;&nbsp;&nbsp;<span style="color:#e6c27c">Label</span><span style="color:#c5c5cc">:</span>&nbsp;<span style="color:#e6c27c">&#x27;Image&#x27;</span><span style="color:#c5c5cc">,</span></div><div style="position:absolute;right:2070px;top:1063.91px;font:400 24px/30px 'Liberation Mono', monospace;color:#888888;white-space:nowrap;-webkit-text-stroke:0.3px;">5</div><div style="position:absolute;left:804.5px;top:1062.91px;font:400 24px/30px 'Liberation Mono', monospace;color:#c5c5cc;white-space:nowrap;-webkit-text-stroke:0.35px;">&nbsp;&nbsp;&nbsp;&nbsp;<span style="color:#e6c27c">Type</span><span style="color:#c5c5cc">:</span>&nbsp;<span style="color:#e6c27c">&#x27;Image&#x27;</span><span style="color:#c5c5cc">,</span></div><div style="position:absolute;right:2070px;top:1099.91px;font:400 24px/30px 'Liberation Mono', monospace;color:#888888;white-space:nowrap;-webkit-text-stroke:0.3px;">6</div><div style="position:absolute;left:804.5px;top:1098.91px;font:400 24px/30px 'Liberation Mono', monospace;color:#c5c5cc;white-space:nowrap;-webkit-text-stroke:0.35px;">&nbsp;&nbsp;<span style="color:#c5c5cc">}</span><span style="color:#c5c5cc">,</span></div><div style="position:absolute;right:2070px;top:1135.91px;font:400 24px/30px 'Liberation Mono', monospace;color:#888888;white-space:nowrap;-webkit-text-stroke:0.3px;">7</div><div style="position:absolute;left:804.5px;top:1134.91px;font:400 24px/30px 'Liberation Mono', monospace;color:#c5c5cc;white-space:nowrap;-webkit-text-stroke:0.35px;">&nbsp;&nbsp;<span style="color:#c5c5cc">{</span></div><div style="position:absolute;right:2070px;top:1171.91px;font:400 24px/30px 'Liberation Mono', monospace;color:#888888;white-space:nowrap;-webkit-text-stroke:0.3px;">8</div><div style="position:absolute;left:804.5px;top:1170.91px;font:400 24px/30px 'Liberation Mono', monospace;color:#c5c5cc;white-space:nowrap;-webkit-text-stroke:0.35px;">&nbsp;&nbsp;&nbsp;&nbsp;<span style="color:#e6c27c">Field</span><span style="color:#c5c5cc">:</span>&nbsp;<span style="color:#e6c27c">&#x27;Name&#x27;</span><span style="color:#c5c5cc">,</span></div><div style="position:absolute;right:2070px;top:1207.91px;font:400 24px/30px 'Liberation Mono', monospace;color:#888888;white-space:nowrap;-webkit-text-stroke:0.3px;">9</div><div style="position:absolute;left:804.5px;top:1206.91px;font:400 24px/30px 'Liberation Mono', monospace;color:#c5c5cc;white-space:nowrap;-webkit-text-stroke:0.35px;">&nbsp;&nbsp;&nbsp;&nbsp;<span style="color:#e6c27c">Label</span><span style="color:#c5c5cc">:</span>&nbsp;<span style="color:#e6c27c">&#x27;Name&#x27;</span><span style="color:#c5c5cc">,</span></div><div style="position:absolute;right:2070px;top:1243.91px;font:400 24px/30px 'Liberation Mono', monospace;color:#888888;white-space:nowrap;-webkit-text-stroke:0.3px;">10</div><div style="position:absolute;left:804.5px;top:1242.91px;font:400 24px/30px 'Liberation Mono', monospace;color:#c5c5cc;white-space:nowrap;-webkit-text-stroke:0.35px;">&nbsp;&nbsp;<span style="color:#c5c5cc">}</span><span style="color:#c5c5cc">,</span></div><div style="position:absolute;right:2070px;top:1279.91px;font:400 24px/30px 'Liberation Mono', monospace;color:#888888;white-space:nowrap;-webkit-text-stroke:0.3px;">11</div><div style="position:absolute;left:804.5px;top:1278.91px;font:400 24px/30px 'Liberation Mono', monospace;color:#c5c5cc;white-space:nowrap;-webkit-text-stroke:0.35px;">&nbsp;&nbsp;<span style="color:#c5c5cc">{</span></div><div style="position:absolute;right:2070px;top:1315.91px;font:400 24px/30px 'Liberation Mono', monospace;color:#888888;white-space:nowrap;-webkit-text-stroke:0.3px;">12</div><div style="position:absolute;left:804.5px;top:1314.91px;font:400 24px/30px 'Liberation Mono', monospace;color:#c5c5cc;white-space:nowrap;-webkit-text-stroke:0.35px;">&nbsp;&nbsp;&nbsp;&nbsp;<span style="color:#e6c27c">Field</span><span style="color:#c5c5cc">:</span>&nbsp;<span style="color:#e6c27c">&#x27;State&#x27;</span><span style="color:#c5c5cc">,</span></div><div style="position:absolute;right:2070px;top:1351.91px;font:400 24px/30px 'Liberation Mono', monospace;color:#888888;white-space:nowrap;-webkit-text-stroke:0.3px;">13</div><div style="position:absolute;left:804.5px;top:1350.91px;font:400 24px/30px 'Liberation Mono', monospace;color:#c5c5cc;white-space:nowrap;-webkit-text-stroke:0.35px;">&nbsp;&nbsp;&nbsp;&nbsp;<span style="color:#e6c27c">Label</span><span style="color:#c5c5cc">:</span>&nbsp;<span style="color:#e6c27c">&#x27;State&#x27;</span><span style="color:#c5c5cc">,</span></div><div style="position:absolute;right:2070px;top:1387.91px;font:400 24px/30px 'Liberation Mono', monospace;color:#888888;white-space:nowrap;-webkit-text-stroke:0.3px;">14</div><div style="position:absolute;left:804.5px;top:1386.91px;font:400 24px/30px 'Liberation Mono', monospace;color:#c5c5cc;white-space:nowrap;-webkit-text-stroke:0.35px;">&nbsp;&nbsp;<span style="color:#c5c5cc">}</span><span style="color:#c5c5cc">,</span></div><div style="position:absolute;right:2070px;top:1423.91px;font:400 24px/30px 'Liberation Mono', monospace;color:#888888;white-space:nowrap;-webkit-text-stroke:0.3px;">15</div><div style="position:absolute;left:804.5px;top:1422.91px;font:400 24px/30px 'Liberation Mono', monospace;color:#c5c5cc;white-space:nowrap;-webkit-text-stroke:0.35px;">&nbsp;&nbsp;<span style="color:#c5c5cc">{</span></div><div style="position:absolute;right:2070px;top:1459.91px;font:400 24px/30px 'Liberation Mono', monospace;color:#888888;white-space:nowrap;-webkit-text-stroke:0.3px;">16</div><div style="position:absolute;left:804.5px;top:1458.91px;font:400 24px/30px 'Liberation Mono', monospace;color:#c5c5cc;white-space:nowrap;-webkit-text-stroke:0.35px;">&nbsp;&nbsp;&nbsp;&nbsp;<span style="color:#e6c27c">Field</span><span style="color:#c5c5cc">:</span>&nbsp;<span style="color:#e6c27c">&#x27;Established&#x27;</span><span style="color:#c5c5cc">,</span></div><div style="position:absolute;right:2070px;top:1495.91px;font:400 24px/30px 'Liberation Mono', monospace;color:#888888;white-space:nowrap;-webkit-text-stroke:0.3px;">17</div><div style="position:absolute;left:804.5px;top:1494.91px;font:400 24px/30px 'Liberation Mono', monospace;color:#c5c5cc;white-space:nowrap;-webkit-text-stroke:0.35px;">&nbsp;&nbsp;&nbsp;&nbsp;<span style="color:#e6c27c">Label</span><span style="color:#c5c5cc">:</span>&nbsp;<span style="color:#e6c27c">&#x27;Established&#x27;</span><span style="color:#c5c5cc">,</span></div><div style="position:absolute;right:2070px;top:1531.91px;font:400 24px/30px 'Liberation Mono', monospace;color:#888888;white-space:nowrap;-webkit-text-stroke:0.3px;">18</div><div style="position:absolute;left:804.5px;top:1530.91px;font:400 24px/30px 'Liberation Mono', monospace;color:#c5c5cc;white-space:nowrap;-webkit-text-stroke:0.35px;">&nbsp;&nbsp;<span style="color:#c5c5cc">}</span><span style="color:#c5c5cc">,</span></div><div style="position:absolute;right:2070px;top:1567.91px;font:400 24px/30px 'Liberation Mono', monospace;color:#888888;white-space:nowrap;-webkit-text-stroke:0.3px;">19</div><div style="position:absolute;left:804.5px;top:1566.91px;font:400 24px/30px 'Liberation Mono', monospace;color:#c5c5cc;white-space:nowrap;-webkit-text-stroke:0.35px;">&nbsp;&nbsp;<span style="color:#c5c5cc">{</span></div><div style="position:absolute;right:2070px;top:1603.91px;font:400 24px/30px 'Liberation Mono', monospace;color:#888888;white-space:nowrap;-webkit-text-stroke:0.3px;">20</div><div style="position:absolute;left:804.5px;top:1602.91px;font:400 24px/30px 'Liberation Mono', monospace;color:#c5c5cc;white-space:nowrap;-webkit-text-stroke:0.35px;">&nbsp;&nbsp;&nbsp;&nbsp;<span style="color:#e6c27c">Field</span><span style="color:#c5c5cc">:</span>&nbsp;<span style="color:#e6c27c">&#x27;Size_km2&#x27;</span><span style="color:#c5c5cc">,</span></div><div style="position:absolute;right:2070px;top:1639.91px;font:400 24px/30px 'Liberation Mono', monospace;color:#888888;white-space:nowrap;-webkit-text-stroke:0.3px;">21</div><div style="position:absolute;left:804.5px;top:1638.91px;font:400 24px/30px 'Liberation Mono', monospace;color:#c5c5cc;white-space:nowrap;-webkit-text-stroke:0.35px;">&nbsp;&nbsp;&nbsp;&nbsp;<span style="color:#e6c27c">Label</span><span style="color:#c5c5cc">:</span>&nbsp;<span style="color:#e6c27c">&#x27;Size&#x27;</span><span style="color:#c5c5cc">,</span></div><div style="position:absolute;right:2070px;top:1675.91px;font:400 24px/30px 'Liberation Mono', monospace;color:#888888;white-space:nowrap;-webkit-text-stroke:0.3px;">22</div><div style="position:absolute;left:804.5px;top:1674.91px;font:400 24px/30px 'Liberation Mono', monospace;color:#c5c5cc;white-space:nowrap;-webkit-text-stroke:0.35px;">&nbsp;&nbsp;<span style="color:#c5c5cc">}</span><span style="color:#c5c5cc">,</span></div><div style="position:absolute;right:2070px;top:1711.91px;font:400 24px/30px 'Liberation Mono', monospace;color:#888888;white-space:nowrap;-webkit-text-stroke:0.3px;">23</div><div style="position:absolute;left:804.5px;top:1710.91px;font:400 24px/30px 'Liberation Mono', monospace;color:#c5c5cc;white-space:nowrap;-webkit-text-stroke:0.35px;">&nbsp;&nbsp;<span style="color:#c5c5cc">{</span></div><div style="position:absolute;right:2070px;top:1747.91px;font:400 24px/30px 'Liberation Mono', monospace;color:#888888;white-space:nowrap;-webkit-text-stroke:0.3px;">24</div><div style="position:absolute;left:804.5px;top:1746.91px;font:400 24px/30px 'Liberation Mono', monospace;color:#c5c5cc;white-space:nowrap;-webkit-text-stroke:0.35px;">&nbsp;&nbsp;&nbsp;&nbsp;<span style="color:#e6c27c">Field</span><span style="color:#c5c5cc">:</span>&nbsp;<span style="color:#e6c27c">&#x27;Desc&#x27;</span><span style="color:#c5c5cc">,</span></div><div style="position:absolute;right:2070px;top:1783.91px;font:400 24px/30px 'Liberation Mono', monospace;color:#888888;white-space:nowrap;-webkit-text-stroke:0.3px;">25</div><div style="position:absolute;left:804.5px;top:1782.91px;font:400 24px/30px 'Liberation Mono', monospace;color:#c5c5cc;white-space:nowrap;-webkit-text-stroke:0.35px;">&nbsp;&nbsp;&nbsp;&nbsp;<span style="color:#e6c27c">Label</span><span style="color:#c5c5cc">:</span>&nbsp;<span style="color:#e6c27c">&#x27;Description&#x27;</span><span style="color:#c5c5cc">,</span></div><div style="position:absolute;right:2070px;top:1819.91px;font:400 24px/30px 'Liberation Mono', monospace;color:#888888;white-space:nowrap;-webkit-text-stroke:0.3px;">26</div><div style="position:absolute;left:804.5px;top:1818.91px;font:400 24px/30px 'Liberation Mono', monospace;color:#c5c5cc;white-space:nowrap;-webkit-text-stroke:0.35px;">&nbsp;&nbsp;<span style="color:#c5c5cc">}</span><span style="color:#c5c5cc">,</span></div><div style="position:absolute;right:2070px;top:1855.91px;font:400 24px/30px 'Liberation Mono', monospace;color:#888888;white-space:nowrap;-webkit-text-stroke:0.3px;">27</div><div style="position:absolute;left:804.5px;top:1854.91px;font:400 24px/30px 'Liberation Mono', monospace;color:#c5c5cc;white-space:nowrap;-webkit-text-stroke:0.35px;"><span style="color:#c5c5cc">]</span><span style="color:#c5c5cc">;</span></div><div style="position:absolute;left:805px;top:951px;width:1px;height:900px;background:#4a4a4a;"></div><div style="position:absolute;left:834px;top:987px;width:1px;height:108px;background:#4a4a4a;"></div><div style="position:absolute;left:834px;top:1167px;width:1px;height:72px;background:#4a4a4a;"></div><div style="position:absolute;left:834px;top:1311px;width:1px;height:72px;background:#4a4a4a;"></div><div style="position:absolute;left:834px;top:1455px;width:1px;height:72px;background:#4a4a4a;"></div><div style="position:absolute;left:834px;top:1599px;width:1px;height:72px;background:#4a4a4a;"></div><div style="position:absolute;left:834px;top:1743px;width:1px;height:72px;background:#4a4a4a;"></div><svg style="position:absolute;left:833px;top:1922px" width="20" height="24"><polygon points="0,0 19,11.75 0,23.5" fill="#9a9a9a"/></svg><div style="position:absolute;left:876.4px;top:1923.30px;font:400 22.2px/28px 'Liberation Sans', sans-serif;color:#9a9a9a;white-space:nowrap;">TEST RUN CODE</div><div style="position:absolute;left:1785px;top:1922.53px;font:400 23px/29px 'Liberation Sans', sans-serif;color:#8c8c8c;white-space:nowrap;">Ln 1, Col 1</div><div style="position:absolute;left:1922px;top:1921.82px;font:400 23.6px/30px 'Liberation Sans', sans-serif;color:#8c8c8c;white-space:nowrap;">JavaScript</div><svg style="position:absolute;left:2070px;top:1936px" width="20" height="18"><g stroke="#9a9a9a" stroke-width="1.6"><line x1="2" y1="16" x2="17" y2="2"/><line x1="9" y1="16" x2="17" y2="8.5"/><line x1="15" y1="16" x2="17" y2="14"/></g></svg>
</body></html>
